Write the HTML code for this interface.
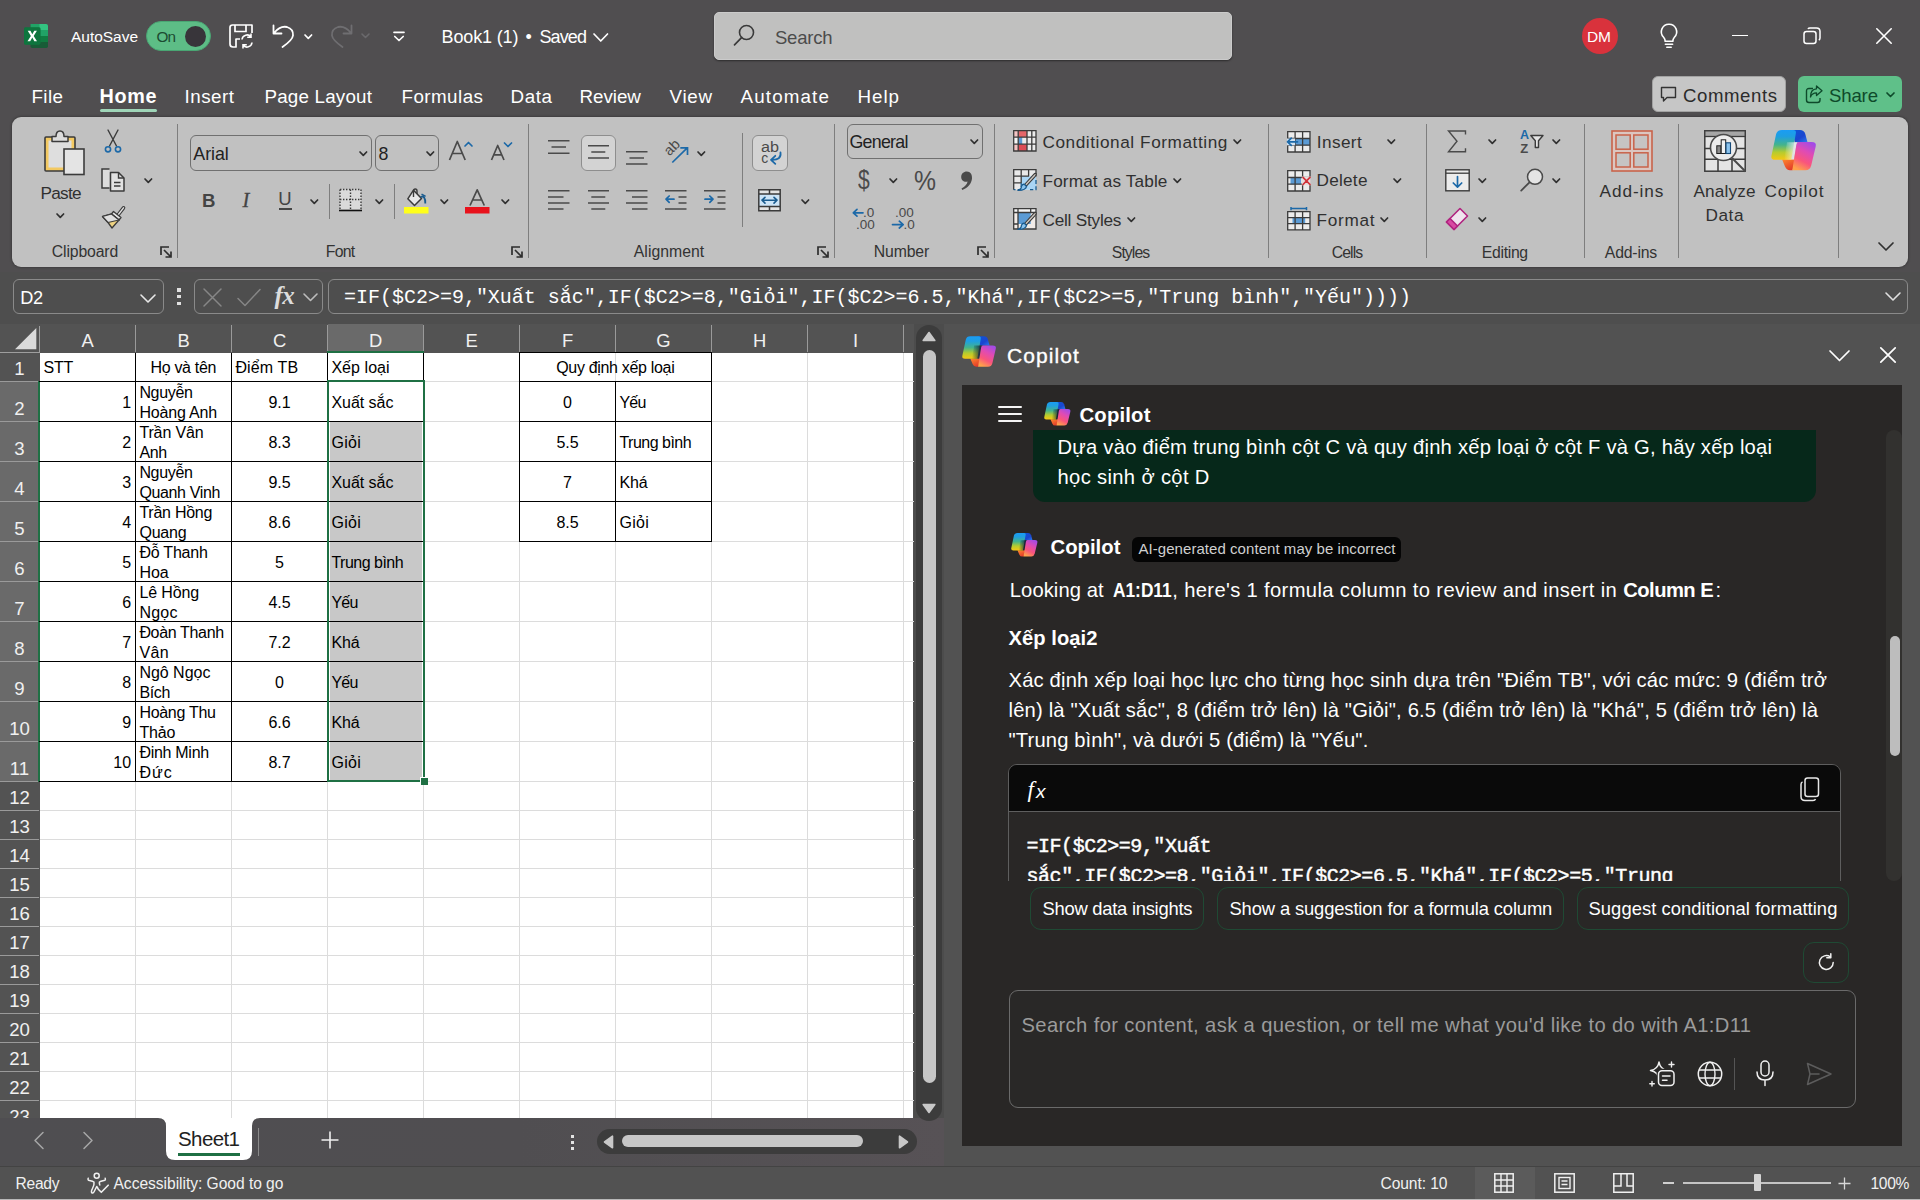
<!DOCTYPE html>
<html lang="en"><head><meta charset="utf-8"><title>Book1 - Excel</title><style>
html,body{margin:0;padding:0}
body{width:1920px;height:1200px;overflow:hidden;background:#504e50;position:relative;font-family:"Liberation Sans",sans-serif;}
.a{position:absolute;box-sizing:border-box}
.t{position:absolute;white-space:nowrap;line-height:1;}
svg{overflow:visible}
</style></head><body>
<!-- sec_title -->
<div id="sec_title"><svg class="a" style="left:24px;top:23.7px;" width="24" height="24" viewBox="0 0 24 24">
<rect x="6.5" y="0" width="17.5" height="24" rx="1.8" fill="#185c37"/>
<path d="M6.5 0 H15.2 V6 H6.5 Z" fill="#21a366"/><path d="M15.2 0 H22.2 Q24 0 24 1.8 V6 H15.2 Z" fill="#33c481"/>
<rect x="6.500" y="6" width="8.700" height="6" fill="#107c41"/><rect x="15.200" y="6" width="8.800" height="6" fill="#21a366"/>
<rect x="6.500" y="12" width="8.700" height="6" fill="#185c37"/><rect x="15.200" y="12" width="8.800" height="6" fill="#107c41"/>
<rect x="0" y="3.300" width="16.500" height="17.400" rx="1.600" fill="#107c41"/><rect x="0" y="3.300" width="16.500" height="17.400" rx="1.600" fill="#0c6b38" opacity=".35"/>
<path d="M3.700 6.800 H6.400 L8.300 10.300 L10.300 6.800 H12.900 L9.700 12 L13 17.200 H10.300 L8.300 13.600 L6.200 17.200 H3.500 L6.900 12 Z" fill="#fff"/></svg><span class="t" style="left:71.0px;top:29.0px;font-size:15.5px;color:#fff;letter-spacing:-0.031px;">AutoSave</span><div class="a" style="left:145.8px;top:20.8px;width:65.5px;height:30px;background:#5dbd86;border-radius:15px;border:1.5px solid #49a673;"></div><span class="t" style="left:156.5px;top:29.0px;font-size:15.3px;color:#1c4a32;letter-spacing:-0.910px;">On</span><div class="a" style="left:185px;top:25.5px;width:21px;height:21px;background:#38353a;border-radius:50%;"></div><svg class="a" style="left:229px;top:24px;" width="24" height="24" viewBox="0 0 24 24"><path d="M1 3.5 Q1 1 3.5 1 H19 L23 1 V9 M1 3.5 V20 Q1 23 4 23 H7 V15 H11" fill="none" stroke="#fff" stroke-width="1.7" stroke-linejoin="round"/>
<path d="M6 1 V7.5 H17 V1" fill="none" stroke="#fff" stroke-width="1.7"/>
<path d="M13 15.5 A5 5 0 0 1 22 13 M22 9.5 V13.3 H18.2 M23 18.5 A5 5 0 0 1 14 21 M14 24.5 V20.7 H17.8" fill="none" stroke="#fff" stroke-width="1.6"/></svg><svg class="a" style="left:272px;top:24px;" width="24" height="24" viewBox="0 0 24 24"><path d="M1.5 1.5 V9.5 H9.5 M2 9 Q8 1.5 15 3 Q21.5 5 21 11.5 Q20.5 16 10.5 23" fill="none" stroke="#fff" stroke-width="1.8" stroke-linecap="round" stroke-linejoin="round"/></svg><svg class="a" style="left:302.7px;top:32.599999999999994px;" width="10.6" height="7.4" viewBox="0 0 10.6 7.4"><path d="M2 2 L5.3 5.4 L8.6 2" fill="none" stroke="#fff" stroke-width="1.7" stroke-linecap="round" stroke-linejoin="round"/></svg><svg class="a" style="left:329px;top:24px;" width="24" height="24" viewBox="0 0 24 24"><path d="M22.5 1.5 V9.5 H14.5 M22 9 Q16 1.5 9 3 Q2.5 5 3 11.5 Q3.5 16 13.5 23" fill="none" stroke="#6f6e71" stroke-width="1.8" stroke-linecap="round" stroke-linejoin="round"/></svg><svg class="a" style="left:360.0px;top:32.25px;" width="11" height="7.5" viewBox="0 0 11 7.5"><path d="M2 2 L5.5 5.5 L9 2" fill="none" stroke="#6a696c" stroke-width="1.6" stroke-linecap="round" stroke-linejoin="round"/></svg><svg class="a" style="left:392.5px;top:30.5px;" width="12" height="11" viewBox="0 0 12 11"><path d="M1 1.300 H11" stroke="#fff" stroke-width="1.700" stroke-linecap="round"/><path d="M1.800 5.500 L6 9.500 L10.200 5.500" fill="none" stroke="#fff" stroke-width="1.700" stroke-linecap="round" stroke-linejoin="round"/></svg><span class="t" style="left:441.5px;top:28.0px;font-size:18px;color:#fff;letter-spacing:-0.130px;">Book1 (1)</span><span class="t" style="left:525.5px;top:28.0px;font-size:18px;color:#fff;">•</span><span class="t" style="left:539.5px;top:28.0px;font-size:18px;color:#fff;letter-spacing:-0.885px;">Saved</span><svg class="a" style="left:592.45px;top:31.700000000000003px;" width="17.5" height="11" viewBox="0 0 17.5 11"><path d="M2 2 L8.75 9 L15.5 2" fill="none" stroke="#fff" stroke-width="1.7" stroke-linecap="round" stroke-linejoin="round"/></svg><div class="a" style="left:713.5px;top:12px;width:518px;height:47.5px;background:#c0c0bf;border-radius:5px;border:1px solid #cbcbcb;box-shadow:0 1px 2px rgba(0,0,0,.45);"></div><svg class="a" style="left:733.3px;top:24px;" width="24" height="24" viewBox="0 0 24 24"><circle cx="13.5" cy="8.5" r="7" fill="none" stroke="#3a3a3a" stroke-width="1.6"/><path d="M8.8 13.4 L1.5 20.8" stroke="#3a3a3a" stroke-width="1.7" stroke-linecap="round"/></svg><span class="t" style="left:775.0px;top:29.0px;font-size:18.5px;color:#4c4c4c;letter-spacing:-0.224px;">Search</span><div class="a" style="left:1581.5px;top:18px;width:36px;height:36px;background:#d9323c;border-radius:50%;"></div><span class="t" style="left:1587.0px;top:29.0px;font-size:15.5px;color:#fff;letter-spacing:-0.106px;">DM</span><svg class="a" style="left:1658px;top:23px;" width="22" height="26" viewBox="0 0 22 26"><path d="M11 1.2 A7.6 7.6 0 0 0 5.6 14.2 Q7 15.8 7.2 18.3 H14.8 Q15 15.8 16.4 14.2 A7.6 7.6 0 0 0 11 1.2 Z" fill="none" stroke="#fff" stroke-width="1.6"/><path d="M7.4 21.2 H14.6 M8.8 24.2 H13.2" stroke="#fff" stroke-width="1.6" stroke-linecap="round"/></svg><div class="a" style="left:1732px;top:34.5px;width:16px;height:1.5px;background:#fff;"></div><svg class="a" style="left:1803px;top:27px;" width="18" height="18" viewBox="0 0 18 18"><rect x="1" y="4.5" width="12" height="12" rx="2.5" fill="none" stroke="#fff" stroke-width="1.5"/><path d="M5 2 Q5.5 1 7 1 H13.5 Q17 1 17 4.5 V11 Q17 12.5 15.8 13" fill="none" stroke="#fff" stroke-width="1.5"/></svg><svg class="a" style="left:1876px;top:28px;" width="16" height="16" viewBox="0 0 16 16"><path d="M0.8 0.8 L15.2 15.2 M15.2 0.8 L0.8 15.2" stroke="#fff" stroke-width="1.6" stroke-linecap="round"/></svg><span class="t" style="left:31.5px;top:88.0px;font-size:18.8px;color:#fff;letter-spacing:0.402px;">File</span><span class="t" style="left:184.5px;top:88.0px;font-size:18.8px;color:#fff;letter-spacing:0.496px;">Insert</span><span class="t" style="left:264.5px;top:88.0px;font-size:18.8px;color:#fff;letter-spacing:0.192px;">Page Layout</span><span class="t" style="left:401.5px;top:88.0px;font-size:18.8px;color:#fff;letter-spacing:0.450px;">Formulas</span><span class="t" style="left:510.5px;top:88.0px;font-size:18.8px;color:#fff;letter-spacing:0.596px;">Data</span><span class="t" style="left:579.5px;top:88.0px;font-size:18.8px;color:#fff;letter-spacing:-0.029px;">Review</span><span class="t" style="left:669.5px;top:88.0px;font-size:18.8px;color:#fff;letter-spacing:0.696px;">View</span><span class="t" style="left:740.5px;top:88.0px;font-size:18.8px;color:#fff;letter-spacing:1.147px;">Automate</span><span class="t" style="left:857.5px;top:88.0px;font-size:18.8px;color:#fff;letter-spacing:0.945px;">Help</span><span class="t" style="left:99.5px;top:87.0px;font-size:19.8px;color:#fff;letter-spacing:0.663px;font-weight:bold;">Home</span><div class="a" style="left:100px;top:108.8px;width:57px;height:3px;background:#9fd5b8;border-radius:1.5px;"></div><div class="a" style="left:1652px;top:76px;width:134px;height:36px;background:#c6c6c6;border-radius:6px;border:1px solid #a2a2a2;"></div><svg class="a" style="left:1660px;top:85.5px;" width="18" height="18" viewBox="0 0 18 18"><path d="M1.5 1.5 H15.5 V11.5 H7 L3.5 15 V11.5 H1.5 Z" fill="none" stroke="#333" stroke-width="1.4" stroke-linejoin="round"/></svg><span class="t" style="left:1683.0px;top:87.0px;font-size:18.6px;color:#2b2b2b;letter-spacing:0.582px;">Comments</span><div class="a" style="left:1798px;top:76px;width:104px;height:36px;background:#5fc089;border-radius:6px;"></div><svg class="a" style="left:1805px;top:85px;" width="18" height="19" viewBox="0 0 18 19"><path d="M8 3.5 H4 Q1.5 3.5 1.5 6 V15 Q1.5 17.5 4 17.5 H12.5 Q15 17.5 15 15 V13" fill="none" stroke="#0e4a2b" stroke-width="1.4"/><path d="M11.5 1 L17 5.8 L11.5 10.6 V7.8 Q7 7.8 5.5 12 Q5.5 4 11.5 3.8 Z" fill="none" stroke="#0e4a2b" stroke-width="1.3" stroke-linejoin="round"/></svg><span class="t" style="left:1829.0px;top:87.0px;font-size:18.6px;color:#0e4a2b;letter-spacing:-0.159px;">Share</span><svg class="a" style="left:1884.5px;top:91.25px;" width="11" height="7.5" viewBox="0 0 11 7.5"><path d="M2 2 L5.5 5.5 L9 2" fill="none" stroke="#0e4a2b" stroke-width="1.7" stroke-linecap="round" stroke-linejoin="round"/></svg></div>
<!-- sec_ribbon -->
<div id="sec_ribbon"><div class="a" style="left:12px;top:117px;width:1895.5px;height:150px;background:#c1c1c1;border-radius:9px;box-shadow:0 0 3px rgba(0,0,0,.45);"></div><div class="a" style="left:176.5px;top:124px;width:1px;height:134px;background:#7e7e7e;"></div><div class="a" style="left:527.5px;top:124px;width:1px;height:134px;background:#7e7e7e;"></div><div class="a" style="left:834.0px;top:124px;width:1px;height:134px;background:#7e7e7e;"></div><div class="a" style="left:994.0px;top:124px;width:1px;height:134px;background:#7e7e7e;"></div><div class="a" style="left:1267.5px;top:124px;width:1px;height:134px;background:#7e7e7e;"></div><div class="a" style="left:1425.5px;top:124px;width:1px;height:134px;background:#7e7e7e;"></div><div class="a" style="left:1584.0px;top:124px;width:1px;height:134px;background:#7e7e7e;"></div><div class="a" style="left:1678.0px;top:124px;width:1px;height:134px;background:#7e7e7e;"></div><div class="a" style="left:1837.5px;top:124px;width:1px;height:134px;background:#7e7e7e;"></div><div class="a" style="left:328.5px;top:184px;width:1px;height:35px;background:#7e7e7e;"></div><div class="a" style="left:393.5px;top:184px;width:1px;height:35px;background:#7e7e7e;"></div><div class="a" style="left:741.5px;top:133px;width:1px;height:94px;background:#7e7e7e;"></div><span class="t" style="left:51.8px;top:244.0px;font-size:15.8px;color:#333;letter-spacing:-0.153px;">Clipboard</span><span class="t" style="left:325.8px;top:244.0px;font-size:15.8px;color:#333;letter-spacing:-0.733px;">Font</span><span class="t" style="left:633.8px;top:244.0px;font-size:15.8px;color:#333;letter-spacing:0.021px;">Alignment</span><span class="t" style="left:873.8px;top:244.0px;font-size:15.8px;color:#333;letter-spacing:-0.154px;">Number</span><span class="t" style="left:1111.8px;top:245.0px;font-size:15.8px;color:#333;letter-spacing:-0.931px;">Styles</span><span class="t" style="left:1331.8px;top:245.0px;font-size:15.8px;color:#333;letter-spacing:-0.939px;">Cells</span><span class="t" style="left:1481.8px;top:245.0px;font-size:15.8px;color:#333;letter-spacing:-0.325px;">Editing</span><span class="t" style="left:1604.8px;top:245.0px;font-size:15.8px;color:#333;letter-spacing:-0.194px;">Add-ins</span><svg class="a" style="left:160px;top:246px;" width="12" height="12" viewBox="0 0 12 12"><path d="M1 9 V1 H9" fill="none" stroke="#2e2e2e" stroke-width="1.700"/><path d="M4 4 L10.500 10.500 M5.500 11 H11 V5.500" fill="none" stroke="#2e2e2e" stroke-width="1.700"/></svg><svg class="a" style="left:511px;top:246px;" width="12" height="12" viewBox="0 0 12 12"><path d="M1 9 V1 H9" fill="none" stroke="#2e2e2e" stroke-width="1.700"/><path d="M4 4 L10.500 10.500 M5.500 11 H11 V5.500" fill="none" stroke="#2e2e2e" stroke-width="1.700"/></svg><svg class="a" style="left:817px;top:246px;" width="12" height="12" viewBox="0 0 12 12"><path d="M1 9 V1 H9" fill="none" stroke="#2e2e2e" stroke-width="1.700"/><path d="M4 4 L10.500 10.500 M5.500 11 H11 V5.500" fill="none" stroke="#2e2e2e" stroke-width="1.700"/></svg><svg class="a" style="left:977px;top:246px;" width="12" height="12" viewBox="0 0 12 12"><path d="M1 9 V1 H9" fill="none" stroke="#2e2e2e" stroke-width="1.700"/><path d="M4 4 L10.500 10.500 M5.500 11 H11 V5.500" fill="none" stroke="#2e2e2e" stroke-width="1.700"/></svg><svg class="a" style="left:43px;top:130px;" width="42" height="45" viewBox="0 0 42 45">
<rect x="2" y="7" width="30" height="34" rx="1" fill="#f3c961" stroke="#3b3b3b" stroke-width="1.6"/>
<rect x="5.5" y="10.5" width="23" height="27" fill="#dedede"/>
<path d="M9 11.5 V6.5 H13 Q13 1 17 1 Q21 1 21 6.5 H25 V11.5 Z" fill="#dcdcdc" stroke="#3b3b3b" stroke-width="1.5" stroke-linejoin="round"/>
<rect x="21" y="19" width="20" height="25.5" fill="#e4e4e4" stroke="#3b3b3b" stroke-width="1.6"/></svg><span class="t" style="left:40.5px;top:185.0px;font-size:17.2px;color:#303030;letter-spacing:-0.746px;">Paste</span><svg class="a" style="left:54.7px;top:212.10000000000002px;" width="10.6" height="7.4" viewBox="0 0 10.6 7.4"><path d="M2 2 L5.3 5.4 L8.6 2" fill="none" stroke="#303030" stroke-width="1.7" stroke-linecap="round" stroke-linejoin="round"/></svg><svg class="a" style="left:104px;top:129px;" width="18" height="25" viewBox="0 0 18 25"><path d="M4 1 L12.5 17 M14 1 L5.5 17" stroke="#3b3b3b" stroke-width="1.4" fill="none" stroke-linecap="round"/>
<circle cx="4" cy="20.3" r="2.6" fill="none" stroke="#1c69a8" stroke-width="1.6"/><circle cx="14" cy="20.3" r="2.6" fill="none" stroke="#1c69a8" stroke-width="1.6"/></svg><svg class="a" style="left:101px;top:168px;" width="24" height="24" viewBox="0 0 24 24"><path d="M8.5 1 H1 V20 H8.5" fill="#dcdcdc" stroke="#3b3b3b" stroke-width="1.5"/>
<path d="M9.5 4.5 H17.5 L23 10 V23 H9.5 Z" fill="#e2e2e2" stroke="#3b3b3b" stroke-width="1.5" stroke-linejoin="round"/>
<path d="M17.5 4.5 V10 H23" fill="none" stroke="#3b3b3b" stroke-width="1.4"/>
<path d="M13 14.5 H19.5 M13 18 H19.5" stroke="#3b3b3b" stroke-width="1.5"/></svg><svg class="a" style="left:142.7px;top:176.60000000000002px;" width="10.6" height="7.4" viewBox="0 0 10.6 7.4"><path d="M2 2 L5.3 5.4 L8.6 2" fill="none" stroke="#303030" stroke-width="1.7" stroke-linecap="round" stroke-linejoin="round"/></svg><svg class="a" style="left:101px;top:206px;" width="24" height="23" viewBox="0 0 24 23"><path d="M17 9 L22.5 1.8" stroke="#3b3b3b" stroke-width="3.6" stroke-linecap="round"/><path d="M17 9 L22.5 1.8" stroke="#e0e0e0" stroke-width="1.4" stroke-linecap="round"/>
<path d="M12.5 5.5 L20 11.5 L18 14 L10.5 8 Z" fill="#e6e6e6" stroke="#3b3b3b" stroke-width="1.3" stroke-linejoin="round"/>
<path d="M10.5 8 L18 14 L11 22 L7 16.5 L1.5 10.5 Z" fill="#efd382" stroke="#3b3b3b" stroke-width="1.3" stroke-linejoin="round"/>
<path d="M1.5 10.5 L10.5 8 L18 14 L7 16.5 Z" fill="#e0e0e0" stroke="#3b3b3b" stroke-width="1.2" stroke-linejoin="round"/></svg><div class="a" style="left:190px;top:135px;width:182px;height:36px;border:1px solid #707070;border-radius:6px;"></div><span class="t" style="left:193.3px;top:146.0px;font-size:17.8px;color:#222;letter-spacing:-0.028px;">Arial</span><svg class="a" style="left:357.7px;top:149.60000000000002px;" width="10.6" height="7.4" viewBox="0 0 10.6 7.4"><path d="M2 2 L5.3 5.4 L8.6 2" fill="none" stroke="#303030" stroke-width="1.7" stroke-linecap="round" stroke-linejoin="round"/></svg><div class="a" style="left:375px;top:135px;width:64px;height:36px;border:1px solid #707070;border-radius:6px;"></div><span class="t" style="left:378.5px;top:146.0px;font-size:17.8px;color:#222;">8</span><svg class="a" style="left:424.7px;top:149.60000000000002px;" width="10.6" height="7.4" viewBox="0 0 10.6 7.4"><path d="M2 2 L5.3 5.4 L8.6 2" fill="none" stroke="#303030" stroke-width="1.7" stroke-linecap="round" stroke-linejoin="round"/></svg><svg class="a" style="left:448px;top:138px;" width="26" height="24" viewBox="0 0 26 24"><path d="M1.5 22 L9.3 3.5 L17.2 22 M4.3 15.5 H14.3" fill="none" stroke="#4a4a4a" stroke-width="1.7" stroke-linejoin="round"/><path d="M17 8 L20.5 4.5 L24 8" fill="none" stroke="#1c69a8" stroke-width="1.7" stroke-linecap="round" stroke-linejoin="round"/></svg><svg class="a" style="left:490px;top:138px;" width="24" height="24" viewBox="0 0 24 24"><path d="M1.5 22 L7.7 7.5 L14 22 M3.8 16.8 H11.7" fill="none" stroke="#4a4a4a" stroke-width="1.7" stroke-linejoin="round"/><path d="M14.5 5 L18 8.5 L21.5 5" fill="none" stroke="#1c69a8" stroke-width="1.7" stroke-linecap="round" stroke-linejoin="round"/></svg><span class="t" style="left:202.0px;top:192.0px;font-size:18.6px;color:#444;font-weight:bold;">B</span><span class="t" style="left:242.5px;top:190.0px;font-size:20.5px;color:#444;font-style:italic;font-family:'Liberation Serif',serif;-webkit-text-stroke:0.3px #444;">I</span><span class="t" style="left:278.3px;top:190.0px;font-size:18.5px;color:#444;">U</span><div class="a" style="left:278.8px;top:208.2px;width:13.5px;height:1.7px;background:#444;"></div><svg class="a" style="left:308.7px;top:197.60000000000002px;" width="10.6" height="7.4" viewBox="0 0 10.6 7.4"><path d="M2 2 L5.3 5.4 L8.6 2" fill="none" stroke="#303030" stroke-width="1.7" stroke-linecap="round" stroke-linejoin="round"/></svg><svg class="a" style="left:339px;top:188px;" width="23" height="24" viewBox="0 0 23 24"><rect x="1" y="1.5" width="21" height="20" fill="#dadada"/>
<path d="M1 1.5 H22 M1 11.5 H22 M1 1.5 V21 M11.5 1.5 V21 M22 1.5 V21" fill="none" stroke="#3b3b3b" stroke-width="1.4" stroke-dasharray="1.4 1.6"/>
<path d="M0 22.5 H23" stroke="#111" stroke-width="1.6"/></svg><svg class="a" style="left:373.7px;top:197.60000000000002px;" width="10.6" height="7.4" viewBox="0 0 10.6 7.4"><path d="M2 2 L5.3 5.4 L8.6 2" fill="none" stroke="#303030" stroke-width="1.7" stroke-linecap="round" stroke-linejoin="round"/></svg><svg class="a" style="left:404px;top:188px;" width="25" height="26" viewBox="0 0 25 26"><rect x="0" y="19" width="24.5" height="6.5" fill="#ffff1a"/>
<path d="M9.5 2.2 L17.5 10.5 L10.5 17.5 L3.8 10.8 Z" fill="#e8e8e8" stroke="#3b3b3b" stroke-width="1.5" stroke-linejoin="round"/>
<path d="M9.5 9 V3 Q9.5 1 11.3 1 Q13 1 13 3 V6" fill="none" stroke="#3b3b3b" stroke-width="1.4"/>
<path d="M16.5 9 Q21.5 7 21.3 15.5" fill="none" stroke="#1b5c8f" stroke-width="1.8"/><path d="M17.5 6.2 L21.6 8.4" stroke="#1b5c8f" stroke-width="1.6"/></svg><svg class="a" style="left:438.7px;top:197.60000000000002px;" width="10.6" height="7.4" viewBox="0 0 10.6 7.4"><path d="M2 2 L5.3 5.4 L8.6 2" fill="none" stroke="#303030" stroke-width="1.7" stroke-linecap="round" stroke-linejoin="round"/></svg><svg class="a" style="left:465px;top:188px;" width="25" height="26" viewBox="0 0 25 26"><rect x="0" y="19" width="24.5" height="6.5" fill="#e8121c"/><path d="M5 17.5 L12.2 1.8 L19.3 17.5 M7.5 12 H16.8" fill="none" stroke="#4a4a4a" stroke-width="1.7" stroke-linejoin="round"/></svg><svg class="a" style="left:499.7px;top:197.60000000000002px;" width="10.6" height="7.4" viewBox="0 0 10.6 7.4"><path d="M2 2 L5.3 5.4 L8.6 2" fill="none" stroke="#303030" stroke-width="1.7" stroke-linecap="round" stroke-linejoin="round"/></svg><svg class="a" style="left:548px;top:140.3px;" width="23" height="20" viewBox="0 0 23 20"><path d="M0 0.8 H21.5 M3.5 7.0 H18 M0 13.3 H21.5 " stroke="#4a4a4a" stroke-width="1.5" fill="none"/></svg><div class="a" style="left:580.5px;top:135px;width:35.5px;height:36px;background:#d3d3d3;border:1px solid #8e8e8e;border-radius:6px;"></div><svg class="a" style="left:587.5px;top:145px;" width="23" height="20" viewBox="0 0 23 20"><path d="M0 0.8 H21 M3.3 7.0 H17.3 M0 13.1 H21 " stroke="#4a4a4a" stroke-width="1.5" fill="none"/></svg><svg class="a" style="left:626.3px;top:151.1px;" width="23" height="20" viewBox="0 0 23 20"><path d="M0 0.8 H21.5 M3.5 6.9 H18 M0 13.0 H21.5 " stroke="#4a4a4a" stroke-width="1.5" fill="none"/></svg><svg class="a" style="left:663px;top:140px;" width="27" height="25" viewBox="0 0 27 25"><text x="0" y="0" transform="translate(6.5,16.5) rotate(-45)" font-family="Liberation Sans, sans-serif" font-size="14.5" fill="#4a4a4a">ab</text>
<path d="M9.3 22.500 L24 8.200 M17.300 7.800 H24.500 V15" fill="none" stroke="#1c69a8" stroke-width="1.700" stroke-linejoin="miter"/></svg><svg class="a" style="left:695.7px;top:149.60000000000002px;" width="10.6" height="7.4" viewBox="0 0 10.6 7.4"><path d="M2 2 L5.3 5.4 L8.6 2" fill="none" stroke="#303030" stroke-width="1.7" stroke-linecap="round" stroke-linejoin="round"/></svg><div class="a" style="left:752px;top:135px;width:35.5px;height:36px;background:#d3d3d3;border:1px solid #8e8e8e;border-radius:6px;"></div><svg class="a" style="left:758px;top:141px;" width="24" height="24" viewBox="0 0 24 24"><text x="3" y="10.600" font-family="Liberation Sans, sans-serif" font-size="14" fill="#4a4a4a" textLength="18" lengthAdjust="spacingAndGlyphs">ab</text><text x="3.300" y="22.300" font-family="Liberation Sans, sans-serif" font-size="14" fill="#4a4a4a">c</text>
<path d="M22.500 11.500 Q23.500 19.300 13.500 18.800 M17.300 14.800 L13 18.800 L17.300 22.800" fill="none" stroke="#1c69a8" stroke-width="1.800" stroke-linejoin="round" stroke-linecap="round"/></svg><svg class="a" style="left:548px;top:190.3px;" width="23" height="26" viewBox="0 0 23 26"><path d="M0 0.8 H21.5 M0 6.9 H15.5 M0 13.0 H21.5 M0 19.1 H15.5 " stroke="#4a4a4a" stroke-width="1.5" fill="none"/></svg><svg class="a" style="left:587.5px;top:190.3px;" width="23" height="26" viewBox="0 0 23 26"><path d="M0 0.8 H21 M3.3 6.9 H17.3 M0 13.0 H21 M3.3 19.1 H17.3 " stroke="#4a4a4a" stroke-width="1.5" fill="none"/></svg><svg class="a" style="left:626.3px;top:190.3px;" width="23" height="26" viewBox="0 0 23 26"><path d="M0 0.8 H21.5 M6 6.9 H21.5 M0 13.0 H21.5 M6 19.1 H21.5 " stroke="#4a4a4a" stroke-width="1.5" fill="none"/></svg><svg class="a" style="left:665px;top:190.3px;" width="23" height="21" viewBox="0 0 23 21"><path d="M0 0.800 H21.500 M13.500 6.900 H21.500 M13.500 12.900 H21.500 M0 18.900 H21.500" stroke="#4a4a4a" stroke-width="1.500" fill="none"/>
<path d="M1.200 9.200 H9 M4.200 6 L1 9.200 L4.200 12.400" fill="none" stroke="#1c69a8" stroke-width="1.700" stroke-linecap="round" stroke-linejoin="round"/></svg><svg class="a" style="left:704px;top:190.3px;" width="23" height="21" viewBox="0 0 23 21"><path d="M0 0.800 H21.500 M13.500 6.900 H21.500 M13.500 12.900 H21.500 M0 18.900 H21.500" stroke="#4a4a4a" stroke-width="1.500" fill="none"/>
<path d="M1 9.200 H8.800 M5.800 6 L9 9.200 L5.800 12.400" fill="none" stroke="#1c69a8" stroke-width="1.700" stroke-linecap="round" stroke-linejoin="round"/></svg><svg class="a" style="left:758px;top:188.8px;" width="23" height="23" viewBox="0 0 23 23"><rect x="0.800" y="0.800" width="21.400" height="20.900" fill="#e4e4e4"/><rect x="0.800" y="5" width="21.400" height="12.500" fill="#cde5f8"/>
<path d="M0.800 0.800 H22.200 V21.700 H0.800 Z M0.800 5 H22.200 M0.800 17.500 H22.200 M11.500 0.800 V5 M11.500 17.500 V21.700" stroke="#3b3b3b" stroke-width="1.500" fill="none"/>
<path d="M4 11.200 H19 M7 8.300 L4 11.200 L7 14.100 M16 8.300 L19 11.200 L16 14.100" fill="none" stroke="#1b5c8f" stroke-width="1.600" stroke-linecap="round" stroke-linejoin="round"/></svg><svg class="a" style="left:799.7px;top:197.60000000000002px;" width="10.6" height="7.4" viewBox="0 0 10.6 7.4"><path d="M2 2 L5.3 5.4 L8.6 2" fill="none" stroke="#303030" stroke-width="1.7" stroke-linecap="round" stroke-linejoin="round"/></svg><div class="a" style="left:847px;top:123.5px;width:136px;height:35px;border:1px solid #707070;border-radius:6px;"></div><span class="t" style="left:849.5px;top:134.0px;font-size:17.8px;color:#222;letter-spacing:-0.721px;">General</span><svg class="a" style="left:968.7px;top:137.60000000000002px;" width="10.6" height="7.4" viewBox="0 0 10.6 7.4"><path d="M2 2 L5.3 5.4 L8.6 2" fill="none" stroke="#303030" stroke-width="1.7" stroke-linecap="round" stroke-linejoin="round"/></svg><span class="t" style="left:857.5px;top:167.0px;font-size:27px;color:#4a4a4a;transform:scaleX(.78);transform-origin:0 0;">$</span><svg class="a" style="left:887.7px;top:176.60000000000002px;" width="10.6" height="7.4" viewBox="0 0 10.6 7.4"><path d="M2 2 L5.3 5.4 L8.6 2" fill="none" stroke="#303030" stroke-width="1.7" stroke-linecap="round" stroke-linejoin="round"/></svg><span class="t" style="left:914.0px;top:167.0px;font-size:27.5px;color:#4a4a4a;transform:scaleX(.9);transform-origin:0 0;">%</span><svg class="a" style="left:959.5px;top:170.5px;" width="13" height="20" viewBox="0 0 13 20"><path d="M6.800 0.500 C10.500 0.500 12.300 3.500 12 7.500 C11.600 12.500 8 16.800 2.300 19 L1.500 17.600 C5 15.800 7.200 13.200 7.600 10.600 C4 11.500 1.200 9.200 1.200 6 C1.200 2.800 3.600 0.500 6.800 0.500 Z" fill="#4a4a4a"/></svg><svg class="a" style="left:852px;top:207px;" width="66" height="24" viewBox="0 0 66 24"><text x="11" y="10.200" font-family="Liberation Sans, sans-serif" font-size="13.5" fill="#4a4a4a">.0</text><text x="4" y="22.300" font-family="Liberation Sans, sans-serif" font-size="13.5" fill="#4a4a4a">.00</text>
<path d="M1.500 5.800 H11 M5 2.400 L1.300 5.800 L5 9.200" fill="none" stroke="#1c69a8" stroke-width="1.700" stroke-linecap="round" stroke-linejoin="round"/>
<text x="43" y="10.200" font-family="Liberation Sans, sans-serif" font-size="13.5" fill="#4a4a4a">.00</text><text x="51.500" y="22.300" font-family="Liberation Sans, sans-serif" font-size="13.5" fill="#4a4a4a">.0</text>
<path d="M40.500 17.600 H51 M47.300 14.200 L51.200 17.600 L47.300 21" fill="none" stroke="#1c69a8" stroke-width="1.700" stroke-linecap="round" stroke-linejoin="round"/></svg><svg class="a" style="left:1013px;top:130px;" width="24" height="22" viewBox="0 0 24 22"><rect x="0.700" y="0.700" width="22.300" height="20.300" fill="#ececec"/>
<rect x="0.700" y="0.700" width="4.500" height="6.500" fill="#f3c4c4"/><rect x="5.200" y="0.700" width="8.800" height="6.500" fill="#e4666a"/>
<rect x="0.700" y="14.200" width="4.500" height="6.800" fill="#f3c4c4"/><rect x="5.200" y="14.200" width="8.800" height="6.800" fill="#dc4c55"/>
<rect x="5.200" y="7.200" width="4" height="7" fill="#5b9bd5"/><rect x="0.700" y="7.200" width="4.500" height="7" fill="#f6f6f6"/>
<path d="M0.700 0.700 H23 V21 H0.700 Z M0.700 7.200 H23 M0.700 14.200 H23 M5.200 0.700 V21 M14 0.700 V21 M18.800 0.700 V21" stroke="#3b3b3b" stroke-width="1.300" fill="none"/></svg><span class="t" style="left:1042.5px;top:134.0px;font-size:17.2px;color:#303030;letter-spacing:0.569px;">Conditional Formatting</span><svg class="a" style="left:1231.7px;top:137.60000000000002px;" width="10.6" height="7.4" viewBox="0 0 10.6 7.4"><path d="M2 2 L5.3 5.4 L8.6 2" fill="none" stroke="#303030" stroke-width="1.7" stroke-linecap="round" stroke-linejoin="round"/></svg><svg class="a" style="left:1013px;top:169.2px;" width="24" height="23" viewBox="0 0 24 23"><rect x="0.700" y="0.700" width="22.300" height="20" fill="#e9e9e9"/><rect x="8.200" y="7.200" width="14.800" height="13.500" fill="#a9d5f5"/>
<path d="M0.700 20.700 V0.700 H23 V7.500 M0.700 7.200 H16 M8.200 0.700 V14 M15.600 0.700 V7.200 M0.700 13.900 H8.200" stroke="#3b3b3b" stroke-width="1.300" fill="none"/>
<path d="M23 11 V20.700 H17 M8.200 14 V20.700 H0.700" stroke="#1b5c8f" stroke-width="1.300" fill="none" stroke-dasharray="4 2.200"/><path d="M22.300 7.300 Q23.800 5.200 22.900 4.500 Q22 3.900 20.500 5.600 L11.500 15.500 L13.300 17.200 Z" fill="#cfc8c0" stroke="#3b3b3b" stroke-width="1.100" stroke-linejoin="round"/>
<path d="M11.300 15.300 L13.600 17.400 Q12.500 21.600 5 21.400 Q8.800 19.800 8.300 17.600 Q9.200 14.800 11.300 15.300 Z" fill="#8cc4ee" stroke="#1b5c8f" stroke-width="1.300" stroke-linejoin="round"/></svg><span class="t" style="left:1042.5px;top:173.0px;font-size:17.2px;color:#303030;letter-spacing:0.142px;">Format as Table</span><svg class="a" style="left:1171.7px;top:176.60000000000002px;" width="10.6" height="7.4" viewBox="0 0 10.6 7.4"><path d="M2 2 L5.3 5.4 L8.6 2" fill="none" stroke="#303030" stroke-width="1.7" stroke-linecap="round" stroke-linejoin="round"/></svg><svg class="a" style="left:1013px;top:208px;" width="24" height="23" viewBox="0 0 24 23"><rect x="0.700" y="0.700" width="22.300" height="20.300" fill="#f2ece8"/><rect x="0.700" y="0.700" width="22.300" height="3.800" fill="#f6f6f6"/>
<rect x="5" y="4.500" width="12.700" height="11.500" fill="#5b9bd5"/>
<path d="M0.700 0.700 H23 V21 H0.700 Z M0.700 4.500 H23 M5 0.700 V21 M17.700 0.700 V4.500 M0.700 16 H5" stroke="#3b3b3b" stroke-width="1.300" fill="none"/><path d="M22.300 7.300 Q23.800 5.200 22.900 4.500 Q22 3.900 20.500 5.600 L11.500 15.500 L13.300 17.200 Z" fill="#cfc8c0" stroke="#3b3b3b" stroke-width="1.100" stroke-linejoin="round"/>
<path d="M11.300 15.300 L13.600 17.400 Q12.500 21.600 5 21.400 Q8.800 19.800 8.300 17.600 Q9.200 14.800 11.300 15.300 Z" fill="#8cc4ee" stroke="#1b5c8f" stroke-width="1.300" stroke-linejoin="round"/></svg><span class="t" style="left:1042.5px;top:212.0px;font-size:17.2px;color:#303030;letter-spacing:-0.225px;">Cell Styles</span><svg class="a" style="left:1125.7px;top:215.60000000000002px;" width="10.6" height="7.4" viewBox="0 0 10.6 7.4"><path d="M2 2 L5.3 5.4 L8.6 2" fill="none" stroke="#303030" stroke-width="1.7" stroke-linecap="round" stroke-linejoin="round"/></svg><svg class="a" style="left:1287.2px;top:130.5px;" width="24" height="22" viewBox="0 0 24 22"><rect x="0.700" y="0.7" width="22.300" height="20.3" fill="#ececec"/><rect x="8.100" y="7.500" width="14.900" height="6.800" fill="#5b9bd5"/><path d="M0.700 0.7 H23 V21.0 H0.700 Z M0.700 7.5 H23 M0.700 14.2 H23 M8.100 0.7 V21.0 M15.600 0.7 V21.0" stroke="#3b3b3b" stroke-width="1.300" fill="none"/><rect x="0" y="7.500" width="8.100" height="6.800" fill="#cfe2f3"/><path d="M0.500 10.800 H10.500 M4.300 7.200 L0.500 10.800 L4.300 14.400" fill="none" stroke="#1c69a8" stroke-width="1.700" stroke-linecap="round" stroke-linejoin="round"/></svg><span class="t" style="left:1316.8px;top:134.0px;font-size:17.2px;color:#303030;letter-spacing:0.397px;">Insert</span><svg class="a" style="left:1385.7px;top:137.60000000000002px;" width="10.6" height="7.4" viewBox="0 0 10.6 7.4"><path d="M2 2 L5.3 5.4 L8.6 2" fill="none" stroke="#303030" stroke-width="1.7" stroke-linecap="round" stroke-linejoin="round"/></svg><svg class="a" style="left:1287.2px;top:169.5px;" width="26" height="22" viewBox="0 0 26 22"><rect x="0.700" y="0.7" width="22.300" height="20.3" fill="#ececec"/><rect x="3.500" y="7.500" width="10.500" height="6.800" fill="#5b9bd5"/><path d="M0.700 0.7 H23 V21.0 H0.700 Z M0.700 7.5 H23 M0.700 14.2 H23 M8.100 0.7 V21.0 M15.600 0.7 V21.0" stroke="#3b3b3b" stroke-width="1.300" fill="none"/><rect x="14.800" y="6.500" width="9" height="8.800" fill="#e6dede"/><path d="M16 7.300 L23 14.500 M23 7.300 L16 14.500" stroke="#d0323a" stroke-width="1.700" stroke-linecap="round"/></svg><span class="t" style="left:1316.5px;top:172.0px;font-size:17.2px;color:#303030;letter-spacing:0.256px;">Delete</span><svg class="a" style="left:1391.7px;top:176.60000000000002px;" width="10.6" height="7.4" viewBox="0 0 10.6 7.4"><path d="M2 2 L5.3 5.4 L8.6 2" fill="none" stroke="#303030" stroke-width="1.7" stroke-linecap="round" stroke-linejoin="round"/></svg><svg class="a" style="left:1287.2px;top:207px;" width="24" height="24" viewBox="0 0 24 24"><rect x="0.700" y="4.6" width="22.300" height="18.2" fill="#ececec"/><rect x="5.500" y="10.700" width="12.700" height="6" fill="#5b9bd5"/><path d="M0.700 4.6 H23 V22.8 H0.700 Z M0.700 10.7 H23 M0.700 16.7 H23 M8.100 4.6 V22.8 M15.600 4.6 V22.8" stroke="#3b3b3b" stroke-width="1.300" fill="none"/><path d="M4 1.500 H19.500 M4 0 V3.200 M19.500 0 V3.200" stroke="#1c69a8" stroke-width="1.500" fill="none"/></svg><span class="t" style="left:1316.5px;top:212.0px;font-size:17.2px;color:#303030;letter-spacing:0.705px;">Format</span><svg class="a" style="left:1378.7px;top:215.60000000000002px;" width="10.6" height="7.4" viewBox="0 0 10.6 7.4"><path d="M2 2 L5.3 5.4 L8.6 2" fill="none" stroke="#303030" stroke-width="1.7" stroke-linecap="round" stroke-linejoin="round"/></svg><svg class="a" style="left:1447px;top:130px;" width="20" height="23" viewBox="0 0 20 23"><path d="M18.5 4.5 V1 H1.5 L10 11.3 L1.5 21.8 H18.5 V18.3" fill="none" stroke="#4a4a4a" stroke-width="1.400" stroke-linejoin="miter"/></svg><svg class="a" style="left:1486.7px;top:137.60000000000002px;" width="10.6" height="7.4" viewBox="0 0 10.6 7.4"><path d="M2 2 L5.3 5.4 L8.6 2" fill="none" stroke="#303030" stroke-width="1.7" stroke-linecap="round" stroke-linejoin="round"/></svg><svg class="a" style="left:1445px;top:169px;" width="25" height="23" viewBox="0 0 25 23"><rect x="0.8" y="0.8" width="23.4" height="21" fill="#ececec" stroke="#3b3b3b" stroke-width="1.4"/><path d="M0.8 4.2 H24.2" stroke="#3b3b3b" stroke-width="1.3"/><path d="M12.5 7.5 V18 M8.3 14 L12.5 18.2 L16.7 14" fill="none" stroke="#1c69a8" stroke-width="1.7" stroke-linecap="round" stroke-linejoin="round"/></svg><svg class="a" style="left:1476.7px;top:176.60000000000002px;" width="10.6" height="7.4" viewBox="0 0 10.6 7.4"><path d="M2 2 L5.3 5.4 L8.6 2" fill="none" stroke="#303030" stroke-width="1.7" stroke-linecap="round" stroke-linejoin="round"/></svg><svg class="a" style="left:1445px;top:207px;" width="24" height="24" viewBox="0 0 24 24"><path d="M15 1.5 L22.5 9 L9 22.5 L1.5 15 Z" fill="#f0e4ee" stroke="#b0237f" stroke-width="1.6" stroke-linejoin="round"/><path d="M5 11.500 L12.500 19 L9 22.500 L1.500 15 Z" fill="#d84aa3" stroke="#b0237f" stroke-width="1.6" stroke-linejoin="round"/></svg><svg class="a" style="left:1476.7px;top:215.60000000000002px;" width="10.6" height="7.4" viewBox="0 0 10.6 7.4"><path d="M2 2 L5.3 5.4 L8.6 2" fill="none" stroke="#303030" stroke-width="1.7" stroke-linecap="round" stroke-linejoin="round"/></svg><svg class="a" style="left:1519px;top:128px;" width="25" height="27" viewBox="0 0 25 27"><text x="1" y="11" font-family="Liberation Sans, sans-serif" font-weight="bold" font-size="12.5" fill="#1c69a8">A</text><text x="1.3" y="25" font-family="Liberation Sans, sans-serif" font-weight="bold" font-size="13" fill="#4a4a4a">Z</text><path d="M11.800 7.500 H24 L19.500 12.800 V19.500 H16.300 V12.800 Z" fill="#e4e4e4" stroke="#3b3b3b" stroke-width="1.4" stroke-linejoin="round"/></svg><svg class="a" style="left:1550.7px;top:137.60000000000002px;" width="10.6" height="7.4" viewBox="0 0 10.6 7.4"><path d="M2 2 L5.3 5.4 L8.6 2" fill="none" stroke="#303030" stroke-width="1.7" stroke-linecap="round" stroke-linejoin="round"/></svg><svg class="a" style="left:1520px;top:168px;" width="24" height="24" viewBox="0 0 24 24"><circle cx="15" cy="8.8" r="7.5" fill="#e4e4e4" stroke="#4a4a4a" stroke-width="1.5"/><path d="M9.5 14.3 L1.2 22.6" stroke="#4a4a4a" stroke-width="1.8" stroke-linecap="round"/></svg><svg class="a" style="left:1550.7px;top:176.60000000000002px;" width="10.6" height="7.4" viewBox="0 0 10.6 7.4"><path d="M2 2 L5.3 5.4 L8.6 2" fill="none" stroke="#303030" stroke-width="1.7" stroke-linecap="round" stroke-linejoin="round"/></svg><svg class="a" style="left:1611px;top:130px;" width="42" height="42" viewBox="0 0 42 42"><rect x="1" y="1" width="40" height="40" fill="#dcc6c0" stroke="#c9634a" stroke-width="1.600"/><rect x="5" y="5" width="14.200" height="14.200" fill="#c6c4c3" stroke="#c9634a" stroke-width="1.500"/><rect x="5" y="22.8" width="14.200" height="14.200" fill="#c6c4c3" stroke="#c9634a" stroke-width="1.500"/><rect x="22.8" y="5" width="14.200" height="14.200" fill="#c6c4c3" stroke="#c9634a" stroke-width="1.500"/><rect x="22.8" y="22.8" width="14.200" height="14.200" fill="#c6c4c3" stroke="#c9634a" stroke-width="1.500"/></svg><span class="t" style="left:1599.5px;top:183.0px;font-size:17.2px;color:#303030;letter-spacing:0.946px;">Add-ins</span><svg class="a" style="left:1704px;top:130px;" width="43" height="43" viewBox="0 0 43 43"><rect x="0.800" y="0.800" width="40.400" height="40.400" fill="#e4e4e4" stroke="#3b3b3b" stroke-width="1.500"/><rect x="0.800" y="0.800" width="40.400" height="5.700" fill="#a6a6a6" stroke="#3b3b3b" stroke-width="1.300"/>
<path d="M0.800 18.500 H41.200 M0.800 29.300 H41.200 M14 29.300 V41.200 M28 29.300 V41.200" stroke="#3b3b3b" stroke-width="1.500" fill="none"/>
<path d="M28 28 L41.500 41.500" stroke="#4a4a4a" stroke-width="2"/>
<circle cx="19.500" cy="17.500" r="13" fill="#ececec" stroke="#4a4a4a" stroke-width="1.600"/>
<rect x="12.800" y="15.800" width="4.200" height="7.700" fill="#8a8a8a" stroke="#1f1f1f" stroke-width="1"/><rect x="17.200" y="9.800" width="4.500" height="13.700" fill="#f2f2f2" stroke="#1f1f1f" stroke-width="1"/><rect x="22" y="12.800" width="4.500" height="10.700" fill="#8cc4ee" stroke="#154a78" stroke-width="1.100"/></svg><span class="t" style="left:1693.5px;top:183.0px;font-size:17.2px;color:#303030;letter-spacing:0.134px;">Analyze</span><span class="t" style="left:1705.5px;top:207.0px;font-size:17.2px;color:#303030;letter-spacing:0.556px;">Data</span><svg class="a" style="left:1771px;top:130.2px;" width="45" height="40.2" viewBox="0 0 45 40.2"><defs>
<linearGradient id="c0a" x1="0" y1="0" x2="0" y2="1"><stop offset="0" stop-color="#1a9cf5"/><stop offset=".22" stop-color="#1f9fe0"/><stop offset=".5" stop-color="#44b48c"/><stop offset=".75" stop-color="#b6cc2e"/><stop offset="1" stop-color="#f5c813"/></linearGradient>
<linearGradient id="c0b" x1="0" y1="0" x2="1" y2="1"><stop offset="0" stop-color="#0b58d8"/><stop offset=".6" stop-color="#1b45cf"/><stop offset="1" stop-color="#2a7af0"/></linearGradient>
<linearGradient id="c0c" x1=".75" y1="0" x2=".3" y2="1"><stop offset="0" stop-color="#a24be6"/><stop offset=".35" stop-color="#df4bb5"/><stop offset=".68" stop-color="#f9557c"/><stop offset="1" stop-color="#ffa24a"/></linearGradient>
<linearGradient id="c0d" x1="0" y1="0" x2=".6" y2="1"><stop offset="0" stop-color="#ff8a2e"/><stop offset="1" stop-color="#e23a2a"/></linearGradient>
<linearGradient id="c0e" x1="0" y1="0" x2="1" y2="0"><stop offset="0" stop-color="#fff" stop-opacity="0"/><stop offset="1" stop-color="#f2f2f6" stop-opacity="0.85"/></linearGradient>
</defs>
<path d="M20 0 H29 Q33 0 34.2 3.800 L36.500 12.300 H24 Z" fill="url(#c0b)"/>
<path d="M11 29.300 H24.500 L21.500 40.200 H19 Q15.500 40.200 14 36.500 Z" fill="url(#c0d)"/>
<path d="M11 0 H22 Q25.500 0 24.800 3.500 L20.300 29.700 H4 Q-0.500 29.700 0.500 25.500 L5 4.500 Q6 0 11 0 Z" fill="url(#c0a)"/>
<path d="M16 12.300 H26 L22.800 29.700 H13 Z" fill="url(#c0e)"/>
<path d="M28 12.100 H40.500 Q45.800 12.100 44.700 16.500 L40.200 35.500 Q39 40.200 34.500 40.200 H21.300 L25.300 15 Q25.800 12.100 28 12.100 Z" fill="url(#c0c)"/></svg><span class="t" style="left:1764.5px;top:183.0px;font-size:17.2px;color:#303030;letter-spacing:0.910px;">Copilot</span><svg class="a" style="left:1877.0px;top:240.5px;" width="18" height="11" viewBox="0 0 18 11"><path d="M2 2 L9.0 9 L16 2" fill="none" stroke="#303030" stroke-width="1.7" stroke-linecap="round" stroke-linejoin="round"/></svg></div>
<!-- sec_formula -->
<div id="sec_formula"><div class="a" style="left:0px;top:272px;width:1920px;height:52px;background:#4e4e4e;"></div><div class="a" style="left:12.5px;top:279px;width:151.5px;height:35px;background:#4e4e4e;border:1px solid #8a8a8a;border-radius:6px;"></div><span class="t" style="left:20.3px;top:289.0px;font-size:18.2px;color:#fff;letter-spacing:-0.396px;">D2</span><svg class="a" style="left:138.6px;top:292.7px;" width="18" height="11" viewBox="0 0 18 11"><path d="M2 2 L9.0 9 L16 2" fill="none" stroke="#e8e8e8" stroke-width="1.6" stroke-linecap="round" stroke-linejoin="round"/></svg><div class="a" style="left:177.2px;top:288.2px;width:3.4px;height:3.4px;background:#e0e0e0;"></div><div class="a" style="left:177.2px;top:295.09999999999997px;width:3.4px;height:3.4px;background:#e0e0e0;"></div><div class="a" style="left:177.2px;top:301.9px;width:3.4px;height:3.4px;background:#e0e0e0;"></div><div class="a" style="left:194px;top:279px;width:128.5px;height:35px;background:#4e4e4e;border:1px solid #8a8a8a;border-radius:6px;"></div><svg class="a" style="left:203px;top:288px;" width="19" height="19" viewBox="0 0 19 19"><path d="M1 1 L18 18 M18 1 L1 18" stroke="#868686" stroke-width="1.5" stroke-linecap="round"/></svg><svg class="a" style="left:237px;top:288px;" width="24" height="19" viewBox="0 0 24 19"><path d="M1 10.5 L8 17.5 L23 1.5" fill="none" stroke="#868686" stroke-width="1.5" stroke-linecap="round" stroke-linejoin="round"/></svg><span class="t" style="left:274.5px;top:283.0px;font-size:25px;color:#dcdcdc;letter-spacing:-0.5px;font-weight:bold;font-style:italic;font-family:'Liberation Serif',serif;">fx</span><svg class="a" style="left:302.0px;top:292.25px;" width="17" height="10.5" viewBox="0 0 17 10.5"><path d="M2 2 L8.5 8.5 L15 2" fill="none" stroke="#bcbcbc" stroke-width="1.6" stroke-linecap="round" stroke-linejoin="round"/></svg><div class="a" style="left:328px;top:279px;width:1579.5px;height:35px;background:#4e4e4e;border:1px solid #8a8a8a;border-radius:6px;"></div><span class="t" style="left:344.0px;top:288.0px;font-size:20px;color:#fff;letter-spacing:-0.013px;font-family:'Liberation Mono',monospace;">=IF($C2&gt;=9,&quot;Xuất sắc&quot;,IF($C2&gt;=8,&quot;Giỏi&quot;,IF($C2&gt;=6.5,&quot;Khá&quot;,IF($C2&gt;=5,&quot;Trung bình&quot;,&quot;Yếu&quot;))))</span><svg class="a" style="left:1884.0px;top:290.5px;" width="18" height="11" viewBox="0 0 18 11"><path d="M2 2 L9.0 9 L16 2" fill="none" stroke="#e0e0e0" stroke-width="1.6" stroke-linecap="round" stroke-linejoin="round"/></svg></div>
<!-- sec_grid -->
<div id="sec_grid"><div class="a" style="left:0;top:324px;width:944px;height:794px;overflow:hidden;background:#505050"><div class="a" style="left:40px;top:28.5px;width:873.3px;height:800px;background:#fff;"></div><div class="a" style="left:40px;top:57px;width:873.5px;height:1px;background:#dcdcdc;"></div><div class="a" style="left:40px;top:97px;width:873.5px;height:1px;background:#dcdcdc;"></div><div class="a" style="left:40px;top:137px;width:873.5px;height:1px;background:#dcdcdc;"></div><div class="a" style="left:40px;top:177px;width:873.5px;height:1px;background:#dcdcdc;"></div><div class="a" style="left:40px;top:217px;width:873.5px;height:1px;background:#dcdcdc;"></div><div class="a" style="left:40px;top:257px;width:873.5px;height:1px;background:#dcdcdc;"></div><div class="a" style="left:40px;top:297px;width:873.5px;height:1px;background:#dcdcdc;"></div><div class="a" style="left:40px;top:337px;width:873.5px;height:1px;background:#dcdcdc;"></div><div class="a" style="left:40px;top:377px;width:873.5px;height:1px;background:#dcdcdc;"></div><div class="a" style="left:40px;top:417px;width:873.5px;height:1px;background:#dcdcdc;"></div><div class="a" style="left:40px;top:457px;width:873.5px;height:1px;background:#dcdcdc;"></div><div class="a" style="left:40px;top:486px;width:873.5px;height:1px;background:#dcdcdc;"></div><div class="a" style="left:40px;top:515px;width:873.5px;height:1px;background:#dcdcdc;"></div><div class="a" style="left:40px;top:544px;width:873.5px;height:1px;background:#dcdcdc;"></div><div class="a" style="left:40px;top:573px;width:873.5px;height:1px;background:#dcdcdc;"></div><div class="a" style="left:40px;top:602px;width:873.5px;height:1px;background:#dcdcdc;"></div><div class="a" style="left:40px;top:631px;width:873.5px;height:1px;background:#dcdcdc;"></div><div class="a" style="left:40px;top:660px;width:873.5px;height:1px;background:#dcdcdc;"></div><div class="a" style="left:40px;top:689px;width:873.5px;height:1px;background:#dcdcdc;"></div><div class="a" style="left:40px;top:718px;width:873.5px;height:1px;background:#dcdcdc;"></div><div class="a" style="left:40px;top:747px;width:873.5px;height:1px;background:#dcdcdc;"></div><div class="a" style="left:40px;top:776px;width:873.5px;height:1px;background:#dcdcdc;"></div><div class="a" style="left:40px;top:805px;width:873.5px;height:1px;background:#dcdcdc;"></div><div class="a" style="left:40px;top:834px;width:873.5px;height:1px;background:#dcdcdc;"></div><div class="a" style="left:135px;top:29px;width:1px;height:800px;background:#dcdcdc;"></div><div class="a" style="left:231px;top:29px;width:1px;height:800px;background:#dcdcdc;"></div><div class="a" style="left:327px;top:29px;width:1px;height:800px;background:#dcdcdc;"></div><div class="a" style="left:423px;top:29px;width:1px;height:800px;background:#dcdcdc;"></div><div class="a" style="left:519px;top:29px;width:1px;height:800px;background:#dcdcdc;"></div><div class="a" style="left:615px;top:29px;width:1px;height:800px;background:#dcdcdc;"></div><div class="a" style="left:711px;top:29px;width:1px;height:800px;background:#dcdcdc;"></div><div class="a" style="left:807px;top:29px;width:1px;height:800px;background:#dcdcdc;"></div><div class="a" style="left:903px;top:29px;width:1px;height:800px;background:#dcdcdc;"></div><div class="a" style="left:0px;top:0px;width:913.5px;height:28.5px;background:#535353;"></div><div class="a" style="left:0px;top:28px;width:40px;height:800px;background:#535353;"></div><div class="a" style="left:328px;top:0px;width:95px;height:28.5px;background:#6a6a6a;"></div><div class="a" style="left:0px;top:58px;width:39px;height:399px;background:#6a6a6a;"></div><div class="a" style="left:0px;top:28px;width:39.5px;height:1px;background:#9e9e9e;"></div><div class="a" style="left:39px;top:2px;width:1px;height:26.5px;background:#9e9e9e;"></div><div class="a" style="left:135px;top:0.5px;width:1px;height:27.5px;background:#9a9a9a;"></div><div class="a" style="left:231px;top:0.5px;width:1px;height:27.5px;background:#9a9a9a;"></div><div class="a" style="left:327px;top:0.5px;width:1px;height:27.5px;background:#9a9a9a;"></div><div class="a" style="left:423px;top:0.5px;width:1px;height:27.5px;background:#9a9a9a;"></div><div class="a" style="left:519px;top:0.5px;width:1px;height:27.5px;background:#9a9a9a;"></div><div class="a" style="left:615px;top:0.5px;width:1px;height:27.5px;background:#9a9a9a;"></div><div class="a" style="left:711px;top:0.5px;width:1px;height:27.5px;background:#9a9a9a;"></div><div class="a" style="left:807px;top:0.5px;width:1px;height:27.5px;background:#9a9a9a;"></div><div class="a" style="left:903px;top:0.5px;width:1px;height:27.5px;background:#9a9a9a;"></div><div class="a" style="left:0px;top:57px;width:39px;height:1px;background:#9a9a9a;"></div><div class="a" style="left:0px;top:97px;width:39px;height:1px;background:#9a9a9a;"></div><div class="a" style="left:0px;top:137px;width:39px;height:1px;background:#9a9a9a;"></div><div class="a" style="left:0px;top:177px;width:39px;height:1px;background:#9a9a9a;"></div><div class="a" style="left:0px;top:217px;width:39px;height:1px;background:#9a9a9a;"></div><div class="a" style="left:0px;top:257px;width:39px;height:1px;background:#9a9a9a;"></div><div class="a" style="left:0px;top:297px;width:39px;height:1px;background:#9a9a9a;"></div><div class="a" style="left:0px;top:337px;width:39px;height:1px;background:#9a9a9a;"></div><div class="a" style="left:0px;top:377px;width:39px;height:1px;background:#9a9a9a;"></div><div class="a" style="left:0px;top:417px;width:39px;height:1px;background:#9a9a9a;"></div><div class="a" style="left:0px;top:457px;width:39px;height:1px;background:#9a9a9a;"></div><div class="a" style="left:0px;top:486px;width:39px;height:1px;background:#9a9a9a;"></div><div class="a" style="left:0px;top:515px;width:39px;height:1px;background:#9a9a9a;"></div><div class="a" style="left:0px;top:544px;width:39px;height:1px;background:#9a9a9a;"></div><div class="a" style="left:0px;top:573px;width:39px;height:1px;background:#9a9a9a;"></div><div class="a" style="left:0px;top:602px;width:39px;height:1px;background:#9a9a9a;"></div><div class="a" style="left:0px;top:631px;width:39px;height:1px;background:#9a9a9a;"></div><div class="a" style="left:0px;top:660px;width:39px;height:1px;background:#9a9a9a;"></div><div class="a" style="left:0px;top:689px;width:39px;height:1px;background:#9a9a9a;"></div><div class="a" style="left:0px;top:718px;width:39px;height:1px;background:#9a9a9a;"></div><div class="a" style="left:0px;top:747px;width:39px;height:1px;background:#9a9a9a;"></div><div class="a" style="left:0px;top:776px;width:39px;height:1px;background:#9a9a9a;"></div><div class="a" style="left:0px;top:805px;width:39px;height:1px;background:#9a9a9a;"></div><div class="a" style="left:0px;top:834px;width:39px;height:1px;background:#9a9a9a;"></div><div class="a" style="left:327px;top:27px;width:97px;height:2px;background:#1f7044;"></div><div class="a" style="left:38px;top:57px;width:2px;height:401px;background:#1f7044;"></div><svg class="a" style="left:15.4px;top:4px;" width="21.3" height="21.2" viewBox="0 0 21.3 21.2"><path d="M21.300 0 V21.200 H0 Z" fill="#dadada"/></svg><span class="t" style="left:81.4px;top:8.0px;font-size:18.4px;color:#f0f0f0;">A</span><span class="t" style="left:177.4px;top:8.0px;font-size:18.4px;color:#f0f0f0;">B</span><span class="t" style="left:272.9px;top:8.0px;font-size:18.4px;color:#f0f0f0;">C</span><span class="t" style="left:368.9px;top:8.0px;font-size:18.4px;color:#f0f0f0;">D</span><span class="t" style="left:465.4px;top:8.0px;font-size:18.4px;color:#f0f0f0;">E</span><span class="t" style="left:561.9px;top:8.0px;font-size:18.4px;color:#f0f0f0;">F</span><span class="t" style="left:656.3px;top:8.0px;font-size:18.4px;color:#f0f0f0;">G</span><span class="t" style="left:752.9px;top:8.0px;font-size:18.4px;color:#f0f0f0;">H</span><span class="t" style="left:852.9px;top:8.0px;font-size:18.4px;color:#f0f0f0;">I</span><span class="t" style="left:14.3px;top:36.0px;font-size:18.6px;color:#f0f0f0;">1</span><span class="t" style="left:14.3px;top:76.0px;font-size:18.6px;color:#f0f0f0;">2</span><span class="t" style="left:14.3px;top:116.0px;font-size:18.6px;color:#f0f0f0;">3</span><span class="t" style="left:14.3px;top:156.0px;font-size:18.6px;color:#f0f0f0;">4</span><span class="t" style="left:14.3px;top:196.0px;font-size:18.6px;color:#f0f0f0;">5</span><span class="t" style="left:14.3px;top:236.0px;font-size:18.6px;color:#f0f0f0;">6</span><span class="t" style="left:14.3px;top:276.0px;font-size:18.6px;color:#f0f0f0;">7</span><span class="t" style="left:14.3px;top:316.0px;font-size:18.6px;color:#f0f0f0;">8</span><span class="t" style="left:14.3px;top:356.0px;font-size:18.6px;color:#f0f0f0;">9</span><span class="t" style="left:9.2px;top:396.0px;font-size:18.6px;color:#f0f0f0;">10</span><span class="t" style="left:9.8px;top:436.0px;font-size:18.6px;color:#f0f0f0;">11</span><span class="t" style="left:9.2px;top:465.0px;font-size:18.6px;color:#f0f0f0;">12</span><span class="t" style="left:9.2px;top:494.0px;font-size:18.6px;color:#f0f0f0;">13</span><span class="t" style="left:9.2px;top:523.0px;font-size:18.6px;color:#f0f0f0;">14</span><span class="t" style="left:9.2px;top:552.0px;font-size:18.6px;color:#f0f0f0;">15</span><span class="t" style="left:9.2px;top:581.0px;font-size:18.6px;color:#f0f0f0;">16</span><span class="t" style="left:9.2px;top:610.0px;font-size:18.6px;color:#f0f0f0;">17</span><span class="t" style="left:9.2px;top:639.0px;font-size:18.6px;color:#f0f0f0;">18</span><span class="t" style="left:9.2px;top:668.0px;font-size:18.6px;color:#f0f0f0;">19</span><span class="t" style="left:9.2px;top:697.0px;font-size:18.6px;color:#f0f0f0;">20</span><span class="t" style="left:9.2px;top:726.0px;font-size:18.6px;color:#f0f0f0;">21</span><span class="t" style="left:9.2px;top:755.0px;font-size:18.6px;color:#f0f0f0;">22</span><span class="t" style="left:9.2px;top:784.0px;font-size:18.6px;color:#f0f0f0;">23</span><div class="a" style="left:39px;top:57px;width:385px;height:1px;background:#000;"></div><div class="a" style="left:39px;top:97px;width:385px;height:1px;background:#000;"></div><div class="a" style="left:39px;top:137px;width:385px;height:1px;background:#000;"></div><div class="a" style="left:39px;top:177px;width:385px;height:1px;background:#000;"></div><div class="a" style="left:39px;top:217px;width:385px;height:1px;background:#000;"></div><div class="a" style="left:39px;top:257px;width:385px;height:1px;background:#000;"></div><div class="a" style="left:39px;top:297px;width:385px;height:1px;background:#000;"></div><div class="a" style="left:39px;top:337px;width:385px;height:1px;background:#000;"></div><div class="a" style="left:39px;top:377px;width:385px;height:1px;background:#000;"></div><div class="a" style="left:39px;top:417px;width:385px;height:1px;background:#000;"></div><div class="a" style="left:39px;top:457px;width:385px;height:1px;background:#000;"></div><div class="a" style="left:135px;top:29px;width:1px;height:429px;background:#000;"></div><div class="a" style="left:231px;top:29px;width:1px;height:429px;background:#000;"></div><div class="a" style="left:327px;top:29px;width:1px;height:429px;background:#000;"></div><div class="a" style="left:423px;top:29px;width:1px;height:429px;background:#000;"></div><div class="a" style="left:519px;top:28px;width:193px;height:1px;background:#000;"></div><div class="a" style="left:519px;top:57px;width:193px;height:1px;background:#000;"></div><div class="a" style="left:519px;top:97px;width:193px;height:1px;background:#000;"></div><div class="a" style="left:519px;top:137px;width:193px;height:1px;background:#000;"></div><div class="a" style="left:519px;top:177px;width:193px;height:1px;background:#000;"></div><div class="a" style="left:519px;top:217px;width:193px;height:1px;background:#000;"></div><div class="a" style="left:519px;top:28px;width:1px;height:190px;background:#000;"></div><div class="a" style="left:711px;top:28px;width:1px;height:190px;background:#000;"></div><div class="a" style="left:615px;top:57px;width:1px;height:161px;background:#000;"></div><div class="a" style="left:329.5px;top:98px;width:92px;height:39px;background:#c8c8c8;"></div><div class="a" style="left:329.5px;top:138px;width:92px;height:39px;background:#c8c8c8;"></div><div class="a" style="left:329.5px;top:178px;width:92px;height:39px;background:#c8c8c8;"></div><div class="a" style="left:329.5px;top:218px;width:92px;height:39px;background:#c8c8c8;"></div><div class="a" style="left:329.5px;top:258px;width:92px;height:39px;background:#c8c8c8;"></div><div class="a" style="left:329.5px;top:298px;width:92px;height:39px;background:#c8c8c8;"></div><div class="a" style="left:329.5px;top:338px;width:92px;height:39px;background:#c8c8c8;"></div><div class="a" style="left:329.5px;top:378px;width:92px;height:39px;background:#c8c8c8;"></div><div class="a" style="left:329.5px;top:418px;width:92px;height:39px;background:#c8c8c8;"></div><div class="a" style="left:326.5px;top:56px;width:98px;height:402px;border:2px solid #1f7044;"></div><div class="a" style="left:419.5px;top:452.5px;width:8px;height:8px;background:#fff;"></div><div class="a" style="left:420.5px;top:453.5px;width:7px;height:7px;background:#1f7044;"></div><span class="t" style="left:43.4px;top:36.0px;font-size:16px;color:#000;letter-spacing:-0.110px;">STT</span><span class="t" style="left:150.6px;top:36.0px;font-size:16px;color:#000;letter-spacing:-0.342px;">Họ và tên</span><span class="t" style="left:235.4px;top:36.0px;font-size:16px;color:#000;letter-spacing:0.135px;">Điểm TB</span><span class="t" style="left:331.4px;top:36.0px;font-size:16px;color:#000;letter-spacing:0.061px;">Xếp loại</span><span class="t" style="left:122.2px;top:71.0px;font-size:16px;color:#000;">1</span><span class="t" style="left:139.4px;top:61.0px;font-size:16px;color:#000;letter-spacing:-0.330px;">Nguyễn</span><span class="t" style="left:139.4px;top:81.0px;font-size:16px;color:#000;letter-spacing:-0.179px;">Hoàng Anh</span><span class="t" style="left:268.4px;top:71.0px;font-size:16px;color:#000;">9.1</span><span class="t" style="left:331.4px;top:71.0px;font-size:16px;color:#000;letter-spacing:-0.037px;">Xuất sắc</span><span class="t" style="left:122.2px;top:111.0px;font-size:16px;color:#000;">2</span><span class="t" style="left:139.4px;top:101.0px;font-size:16px;color:#000;letter-spacing:-0.139px;">Trần Vân</span><span class="t" style="left:139.4px;top:121.0px;font-size:16px;color:#000;letter-spacing:-0.360px;">Anh</span><span class="t" style="left:268.4px;top:111.0px;font-size:16px;color:#000;">8.3</span><span class="t" style="left:331.4px;top:111.0px;font-size:16px;color:#000;letter-spacing:0.349px;">Giỏi</span><span class="t" style="left:122.2px;top:151.0px;font-size:16px;color:#000;">3</span><span class="t" style="left:139.4px;top:141.0px;font-size:16px;color:#000;letter-spacing:-0.330px;">Nguyễn</span><span class="t" style="left:139.4px;top:161.0px;font-size:16px;color:#000;letter-spacing:-0.358px;">Quanh Vinh</span><span class="t" style="left:268.4px;top:151.0px;font-size:16px;color:#000;">9.5</span><span class="t" style="left:331.4px;top:151.0px;font-size:16px;color:#000;letter-spacing:-0.037px;">Xuất sắc</span><span class="t" style="left:122.2px;top:191.0px;font-size:16px;color:#000;">4</span><span class="t" style="left:139.4px;top:181.0px;font-size:16px;color:#000;letter-spacing:-0.250px;">Trần Hồng</span><span class="t" style="left:139.4px;top:201.0px;font-size:16px;color:#000;letter-spacing:-0.197px;">Quang</span><span class="t" style="left:268.4px;top:191.0px;font-size:16px;color:#000;">8.6</span><span class="t" style="left:331.4px;top:191.0px;font-size:16px;color:#000;letter-spacing:0.349px;">Giỏi</span><span class="t" style="left:122.2px;top:231.0px;font-size:16px;color:#000;">5</span><span class="t" style="left:139.4px;top:221.0px;font-size:16px;color:#000;letter-spacing:-0.211px;">Đỗ Thanh</span><span class="t" style="left:139.4px;top:241.0px;font-size:16px;color:#000;letter-spacing:-0.051px;">Hoa</span><span class="t" style="left:275.1px;top:231.0px;font-size:16px;color:#000;">5</span><span class="t" style="left:331.4px;top:231.0px;font-size:16px;color:#000;letter-spacing:-0.505px;">Trung bình</span><span class="t" style="left:122.2px;top:271.0px;font-size:16px;color:#000;">6</span><span class="t" style="left:139.4px;top:261.0px;font-size:16px;color:#000;letter-spacing:-0.124px;">Lê Hồng</span><span class="t" style="left:139.4px;top:281.0px;font-size:16px;color:#000;letter-spacing:0.216px;">Ngọc</span><span class="t" style="left:268.4px;top:271.0px;font-size:16px;color:#000;">4.5</span><span class="t" style="left:331.4px;top:271.0px;font-size:16px;color:#000;letter-spacing:-0.735px;">Yếu</span><span class="t" style="left:122.2px;top:311.0px;font-size:16px;color:#000;">7</span><span class="t" style="left:139.4px;top:301.0px;font-size:16px;color:#000;letter-spacing:-0.336px;">Đoàn Thanh</span><span class="t" style="left:139.4px;top:321.0px;font-size:16px;color:#000;letter-spacing:0.390px;">Vân</span><span class="t" style="left:268.4px;top:311.0px;font-size:16px;color:#000;">7.2</span><span class="t" style="left:331.4px;top:311.0px;font-size:16px;color:#000;letter-spacing:-0.110px;">Khá</span><span class="t" style="left:122.2px;top:351.0px;font-size:16px;color:#000;">8</span><span class="t" style="left:139.4px;top:341.0px;font-size:16px;color:#000;letter-spacing:-0.021px;">Ngô Ngọc</span><span class="t" style="left:139.4px;top:361.0px;font-size:16px;color:#000;letter-spacing:-0.339px;">Bích</span><span class="t" style="left:275.1px;top:351.0px;font-size:16px;color:#000;">0</span><span class="t" style="left:331.4px;top:351.0px;font-size:16px;color:#000;letter-spacing:-0.735px;">Yếu</span><span class="t" style="left:122.2px;top:391.0px;font-size:16px;color:#000;">9</span><span class="t" style="left:139.4px;top:381.0px;font-size:16px;color:#000;letter-spacing:-0.297px;">Hoàng Thu</span><span class="t" style="left:139.4px;top:401.0px;font-size:16px;color:#000;letter-spacing:-0.157px;">Thảo</span><span class="t" style="left:268.4px;top:391.0px;font-size:16px;color:#000;">6.6</span><span class="t" style="left:331.4px;top:391.0px;font-size:16px;color:#000;letter-spacing:-0.110px;">Khá</span><span class="t" style="left:113.3px;top:431.0px;font-size:16px;color:#000;">10</span><span class="t" style="left:139.4px;top:421.0px;font-size:16px;color:#000;letter-spacing:-0.285px;">Đinh Minh</span><span class="t" style="left:139.4px;top:441.0px;font-size:16px;color:#000;letter-spacing:0.992px;">Đức</span><span class="t" style="left:268.4px;top:431.0px;font-size:16px;color:#000;">8.7</span><span class="t" style="left:331.4px;top:431.0px;font-size:16px;color:#000;letter-spacing:0.349px;">Giỏi</span><span class="t" style="left:556.2px;top:36.0px;font-size:16px;color:#000;letter-spacing:-0.321px;">Quy định xếp loại</span><span class="t" style="left:563.1px;top:71.0px;font-size:16px;color:#000;">0</span><span class="t" style="left:619.4px;top:71.0px;font-size:16px;color:#000;letter-spacing:-0.735px;">Yếu</span><span class="t" style="left:556.4px;top:111.0px;font-size:16px;color:#000;">5.5</span><span class="t" style="left:619.4px;top:111.0px;font-size:16px;color:#000;letter-spacing:-0.505px;">Trung bình</span><span class="t" style="left:563.1px;top:151.0px;font-size:16px;color:#000;">7</span><span class="t" style="left:619.4px;top:151.0px;font-size:16px;color:#000;letter-spacing:-0.110px;">Khá</span><span class="t" style="left:556.4px;top:191.0px;font-size:16px;color:#000;">8.5</span><span class="t" style="left:619.4px;top:191.0px;font-size:16px;color:#000;letter-spacing:0.349px;">Giỏi</span><div class="a" style="left:913.5px;top:0px;width:31px;height:800px;background:#4c4c4c;"></div><div class="a" style="left:916px;top:0.5px;width:26px;height:780px;background:#3c3c3c;border-radius:13px 13px 0 0;"></div><div class="a" style="left:922.5px;top:25.5px;width:13px;height:733px;background:#c6c6c6;border-radius:6.5px;"></div><svg class="a" style="left:922px;top:7px;" width="14" height="11" viewBox="0 0 14 11"><path d="M7 1.5 L12.800 9.500 H1.200 Z" fill="#c8c8c8" stroke="#c8c8c8" stroke-width="1.600" stroke-linejoin="round"/></svg><svg class="a" style="left:922px;top:777px;" width="14" height="11" viewBox="0 0 14 11"><path d="M7 9.500 L12.800 1.500 H1.200 Z" fill="#c8c8c8" stroke="#c8c8c8" stroke-width="1.600" stroke-linejoin="round"/></svg></div></div>
<!-- sec_copilot -->
<div id="sec_copilot"><div class="a" style="left:944px;top:324px;width:976px;height:842px;background:#525252;"></div><svg class="a" style="left:962px;top:336.3px;" width="34" height="31" viewBox="0 0 45 40.2"><defs>
<linearGradient id="c1a" x1="0" y1="0" x2="0" y2="1"><stop offset="0" stop-color="#1a9cf5"/><stop offset=".22" stop-color="#1f9fe0"/><stop offset=".5" stop-color="#44b48c"/><stop offset=".75" stop-color="#b6cc2e"/><stop offset="1" stop-color="#f5c813"/></linearGradient>
<linearGradient id="c1b" x1="0" y1="0" x2="1" y2="1"><stop offset="0" stop-color="#0b58d8"/><stop offset=".6" stop-color="#1b45cf"/><stop offset="1" stop-color="#2a7af0"/></linearGradient>
<linearGradient id="c1c" x1=".75" y1="0" x2=".3" y2="1"><stop offset="0" stop-color="#a24be6"/><stop offset=".35" stop-color="#df4bb5"/><stop offset=".68" stop-color="#f9557c"/><stop offset="1" stop-color="#ffa24a"/></linearGradient>
<linearGradient id="c1d" x1="0" y1="0" x2=".6" y2="1"><stop offset="0" stop-color="#ff8a2e"/><stop offset="1" stop-color="#e23a2a"/></linearGradient>
<linearGradient id="c1e" x1="0" y1="0" x2="1" y2="0"><stop offset="0" stop-color="#0a2a3a" stop-opacity="0"/><stop offset="1" stop-color="#14243c" stop-opacity="0.9"/></linearGradient>
</defs>
<path d="M20 0 H29 Q33 0 34.2 3.800 L36.500 12.300 H24 Z" fill="url(#c1b)"/>
<path d="M11 29.300 H24.500 L21.500 40.200 H19 Q15.500 40.200 14 36.500 Z" fill="url(#c1d)"/>
<path d="M11 0 H22 Q25.500 0 24.800 3.500 L20.300 29.700 H4 Q-0.500 29.700 0.500 25.500 L5 4.500 Q6 0 11 0 Z" fill="url(#c1a)"/>
<path d="M16 12.300 H26 L22.800 29.700 H13 Z" fill="url(#c1e)"/>
<path d="M28 12.100 H40.500 Q45.800 12.100 44.700 16.500 L40.200 35.500 Q39 40.200 34.500 40.200 H21.300 L25.300 15 Q25.800 12.100 28 12.100 Z" fill="url(#c1c)"/></svg><span class="t" style="left:1007.0px;top:345.0px;font-size:21px;color:#fff;letter-spacing:1.097px;-webkit-text-stroke:0.35px #fff;">Copilot</span><svg class="a" style="left:1827.5px;top:348.75px;" width="23" height="13.5" viewBox="0 0 23 13.5"><path d="M2 2 L11.5 11.5 L21 2" fill="none" stroke="#fff" stroke-width="1.7" stroke-linecap="round" stroke-linejoin="round"/></svg><svg class="a" style="left:1880.3px;top:347.2px;" width="16" height="16" viewBox="0 0 16 16"><path d="M0.800 0.800 L15.200 15.200 M15.200 0.800 L0.800 15.200" stroke="#fff" stroke-width="1.700" stroke-linecap="round"/></svg><div class="a" style="left:962px;top:385px;width:940px;height:761px;background:#292726;overflow:hidden"><div class="a" style="left:71px;top:35px;width:783px;height:82px;background:#06281a;border-radius:12px;"></div><div class="a" style="left:71px;top:0px;width:783px;height:45px;background:#292726;"></div><div class="a" style="left:36px;top:20.5px;width:23.5px;height:2px;background:#f4f4f4;border-radius:1px;"></div><div class="a" style="left:36px;top:27.80000000000001px;width:23.5px;height:2px;background:#f4f4f4;border-radius:1px;"></div><div class="a" style="left:36px;top:35px;width:23.5px;height:2px;background:#f4f4f4;border-radius:1px;"></div><svg class="a" style="left:81.5px;top:16px;" width="26.5" height="25.5" viewBox="0 0 45 40.2"><defs>
<linearGradient id="c2a" x1="0" y1="0" x2="0" y2="1"><stop offset="0" stop-color="#1a9cf5"/><stop offset=".22" stop-color="#1f9fe0"/><stop offset=".5" stop-color="#44b48c"/><stop offset=".75" stop-color="#b6cc2e"/><stop offset="1" stop-color="#f5c813"/></linearGradient>
<linearGradient id="c2b" x1="0" y1="0" x2="1" y2="1"><stop offset="0" stop-color="#0b58d8"/><stop offset=".6" stop-color="#1b45cf"/><stop offset="1" stop-color="#2a7af0"/></linearGradient>
<linearGradient id="c2c" x1=".75" y1="0" x2=".3" y2="1"><stop offset="0" stop-color="#a24be6"/><stop offset=".35" stop-color="#df4bb5"/><stop offset=".68" stop-color="#f9557c"/><stop offset="1" stop-color="#ffa24a"/></linearGradient>
<linearGradient id="c2d" x1="0" y1="0" x2=".6" y2="1"><stop offset="0" stop-color="#ff8a2e"/><stop offset="1" stop-color="#e23a2a"/></linearGradient>
<linearGradient id="c2e" x1="0" y1="0" x2="1" y2="0"><stop offset="0" stop-color="#0a2a3a" stop-opacity="0"/><stop offset="1" stop-color="#14243c" stop-opacity="0.9"/></linearGradient>
</defs>
<path d="M20 0 H29 Q33 0 34.2 3.800 L36.500 12.300 H24 Z" fill="url(#c2b)"/>
<path d="M11 29.300 H24.500 L21.500 40.200 H19 Q15.500 40.200 14 36.500 Z" fill="url(#c2d)"/>
<path d="M11 0 H22 Q25.500 0 24.800 3.500 L20.300 29.700 H4 Q-0.500 29.700 0.500 25.500 L5 4.500 Q6 0 11 0 Z" fill="url(#c2a)"/>
<path d="M16 12.300 H26 L22.800 29.700 H13 Z" fill="url(#c2e)"/>
<path d="M28 12.100 H40.500 Q45.800 12.100 44.700 16.500 L40.200 35.500 Q39 40.200 34.500 40.200 H21.300 L25.300 15 Q25.800 12.100 28 12.100 Z" fill="url(#c2c)"/></svg><span class="t" style="left:117.5px;top:20.0px;font-size:20.3px;color:#fff;letter-spacing:0.183px;font-weight:bold;">Copilot</span><span class="t" style="left:95.5px;top:52.0px;font-size:20.2px;color:#fff;letter-spacing:0.235px;">Dựa vào điểm trung bình cột C và quy định xếp loại ở cột F và G, hãy xếp loại</span><span class="t" style="left:95.5px;top:82.0px;font-size:20.2px;color:#fff;letter-spacing:0.343px;">học sinh ở cột D</span><svg class="a" style="left:48.5px;top:147px;" width="26.5" height="25.5" viewBox="0 0 45 40.2"><defs>
<linearGradient id="c3a" x1="0" y1="0" x2="0" y2="1"><stop offset="0" stop-color="#1a9cf5"/><stop offset=".22" stop-color="#1f9fe0"/><stop offset=".5" stop-color="#44b48c"/><stop offset=".75" stop-color="#b6cc2e"/><stop offset="1" stop-color="#f5c813"/></linearGradient>
<linearGradient id="c3b" x1="0" y1="0" x2="1" y2="1"><stop offset="0" stop-color="#0b58d8"/><stop offset=".6" stop-color="#1b45cf"/><stop offset="1" stop-color="#2a7af0"/></linearGradient>
<linearGradient id="c3c" x1=".75" y1="0" x2=".3" y2="1"><stop offset="0" stop-color="#a24be6"/><stop offset=".35" stop-color="#df4bb5"/><stop offset=".68" stop-color="#f9557c"/><stop offset="1" stop-color="#ffa24a"/></linearGradient>
<linearGradient id="c3d" x1="0" y1="0" x2=".6" y2="1"><stop offset="0" stop-color="#ff8a2e"/><stop offset="1" stop-color="#e23a2a"/></linearGradient>
<linearGradient id="c3e" x1="0" y1="0" x2="1" y2="0"><stop offset="0" stop-color="#0a2a3a" stop-opacity="0"/><stop offset="1" stop-color="#14243c" stop-opacity="0.9"/></linearGradient>
</defs>
<path d="M20 0 H29 Q33 0 34.2 3.800 L36.500 12.300 H24 Z" fill="url(#c3b)"/>
<path d="M11 29.300 H24.500 L21.500 40.200 H19 Q15.500 40.200 14 36.500 Z" fill="url(#c3d)"/>
<path d="M11 0 H22 Q25.500 0 24.800 3.500 L20.300 29.700 H4 Q-0.500 29.700 0.500 25.500 L5 4.500 Q6 0 11 0 Z" fill="url(#c3a)"/>
<path d="M16 12.300 H26 L22.800 29.700 H13 Z" fill="url(#c3e)"/>
<path d="M28 12.100 H40.500 Q45.800 12.100 44.700 16.500 L40.200 35.500 Q39 40.200 34.500 40.200 H21.300 L25.300 15 Q25.800 12.100 28 12.100 Z" fill="url(#c3c)"/></svg><span class="t" style="left:88.5px;top:152.0px;font-size:20.3px;color:#fff;letter-spacing:0.016px;font-weight:bold;">Copilot</span><div class="a" style="left:170px;top:152px;width:269px;height:24.5px;background:#050505;border-radius:6px;"></div><span class="t" style="left:176.5px;top:156.0px;font-size:15px;color:#d0d0d0;letter-spacing:0.052px;">AI-generated content may be incorrect</span><span class="t" style="left:47.8px;top:195.0px;font-size:20.2px;color:#fff;letter-spacing:0.075px;">Looking at</span><span class="t" style="left:150.5px;top:195.0px;font-size:20.2px;color:#fff;font-weight:bold;transform:scaleX(0.857);transform-origin:0 0;">A1:D11</span><span class="t" style="left:210.3px;top:195.0px;font-size:20.2px;color:#fff;letter-spacing:0.343px;">, here&#x27;s 1 formula column to review and insert in</span><span class="t" style="left:661.3px;top:195.0px;font-size:20.2px;color:#fff;letter-spacing:-0.548px;font-weight:bold;">Column E</span><span class="t" style="left:753.5px;top:195.0px;font-size:20.2px;color:#fff;letter-spacing:-2.656px;">:</span><span class="t" style="left:46.5px;top:243.0px;font-size:20.2px;color:#fff;letter-spacing:0.038px;font-weight:bold;">Xếp loại2</span><span class="t" style="left:46.5px;top:285.0px;font-size:20.2px;color:#fff;letter-spacing:0.171px;">Xác định xếp loại học lực cho từng học sinh dựa trên &quot;Điểm TB&quot;, với các mức: 9 (điểm trở</span><span class="t" style="left:46.5px;top:315.0px;font-size:20.2px;color:#fff;letter-spacing:0.174px;">lên) là &quot;Xuất sắc&quot;, 8 (điểm trở lên) là &quot;Giỏi&quot;, 6.5 (điểm trở lên) là &quot;Khá&quot;, 5 (điểm trở lên) là</span><span class="t" style="left:46.5px;top:345.0px;font-size:20.2px;color:#fff;letter-spacing:0.141px;">&quot;Trung bình&quot;, và dưới 5 (điểm) là &quot;Yếu&quot;.</span><div class="a" style="left:46px;top:379px;width:833px;height:141px;background:#292726;border:1px solid #5e5e5e;border-radius:9px;overflow:hidden;"></div><div class="a" style="left:47px;top:380px;width:831px;height:46px;background:#0a0a0a;border-radius:8px 8px 0 0;"></div><div class="a" style="left:47px;top:426px;width:831px;height:1px;background:#5e5e5e;"></div><span class="t" style="left:65.5px;top:393.0px;font-size:23px;color:#fff;font-style:italic;font-family:'Liberation Serif',serif;">f</span><span class="t" style="left:74.0px;top:397.0px;font-size:19px;color:#fff;font-style:italic;">x</span><svg class="a" style="left:838px;top:392px;" width="20" height="25" viewBox="0 0 20 25"><rect x="5" y="1" width="13.500" height="18.500" rx="2.500" fill="none" stroke="#e8e8e8" stroke-width="1.500"/><path d="M2.500 5 Q1 5.500 1 7.500 V19.500 Q1 23.500 5 23.500 H13 Q15 23.500 15.500 22" fill="none" stroke="#e8e8e8" stroke-width="1.500"/></svg><span class="t" style="left:64.5px;top:452.0px;font-size:20px;color:#fff;letter-spacing:-0.468px;font-family:'Liberation Mono',monospace;-webkit-text-stroke:0.45px #fff;">=IF($C2&gt;=9,&quot;Xuất</span><span class="t" style="left:64.5px;top:482.0px;font-size:20px;color:#fff;letter-spacing:-0.456px;font-family:'Liberation Mono',monospace;-webkit-text-stroke:0.45px #fff;">sắc&quot;,IF($C2&gt;=8,&quot;Giỏi&quot;,IF($C2&gt;=6.5,&quot;Khá&quot;,IF($C2&gt;=5,&quot;Trung</span><div class="a" style="left:0px;top:495.5px;width:924px;height:270px;background:#292726;"></div><div class="a" style="left:68px;top:502px;width:174px;height:43px;background:#292726;border:1px solid #1f4a34;border-radius:11px;"></div><span class="t" style="left:80.5px;top:515.0px;font-size:18.4px;color:#fff;letter-spacing:-0.262px;">Show data insights</span><div class="a" style="left:255px;top:502px;width:347px;height:43px;background:#292726;border:1px solid #1f4a34;border-radius:11px;"></div><span class="t" style="left:267.5px;top:515.0px;font-size:18.4px;color:#fff;letter-spacing:-0.144px;">Show a suggestion for a formula column</span><div class="a" style="left:615px;top:502px;width:272px;height:43px;background:#292726;border:1px solid #1f4a34;border-radius:11px;"></div><span class="t" style="left:626.5px;top:515.0px;font-size:18.4px;color:#fff;letter-spacing:0.051px;">Suggest conditional formatting</span><div class="a" style="left:841px;top:557px;width:46px;height:41px;background:#292726;border:1px solid #1f4a34;border-radius:11px;"></div><svg class="a" style="left:855px;top:568px;" width="19" height="19" viewBox="0 0 19 19"><path d="M16.200 9.500 A6.900 6.900 0 1 1 13.300 3.900" fill="none" stroke="#f0f0f0" stroke-width="1.500" stroke-linecap="round"/><path d="M13.800 0.800 V4.800 H9.800" fill="none" stroke="#f0f0f0" stroke-width="1.500" stroke-linecap="round" stroke-linejoin="round"/></svg><div class="a" style="left:47px;top:604.5px;width:847px;height:118px;background:#292827;border:1px solid #6a6a6a;border-radius:9px;"></div><span class="t" style="left:59.5px;top:630.0px;font-size:20.2px;color:#9b9b9b;letter-spacing:0.370px;">Search for content, ask a question, or tell me what you&#x27;d like to do with A1:D11</span><svg class="a" style="left:686px;top:675px;" width="28" height="27" viewBox="0 0 28 27"><path d="M11 2 Q12.200 9.300 19.500 10.500 Q12.200 11.700 11 19 Q9.800 11.700 2.500 10.500 Q9.800 9.300 11 2 Z" fill="none" stroke="#f0f0f0" stroke-width="1.500" stroke-linejoin="round"/>
<path d="M23.500 2 V7 M21 4.500 H26" stroke="#f0f0f0" stroke-width="1.400" stroke-linecap="round"/><path d="M4 21.500 V26 M1.800 23.800 H6.300" stroke="#f0f0f0" stroke-width="1.400" stroke-linecap="round"/>
<rect x="10.500" y="10.800" width="15.500" height="14.700" rx="3.500" fill="#292827" stroke="#292827" stroke-width="4"/>
<rect x="10.500" y="10.800" width="15.500" height="14.700" rx="3.500" fill="#292827" stroke="#f0f0f0" stroke-width="1.500"/><path d="M14.500 16 H22 M14.500 20.300 H19" stroke="#f0f0f0" stroke-width="1.500" stroke-linecap="round"/></svg><svg class="a" style="left:735px;top:676px;" width="26" height="26" viewBox="0 0 26 26"><circle cx="13" cy="13" r="11.700" fill="none" stroke="#f0f0f0" stroke-width="1.500"/><ellipse cx="13" cy="13" rx="5" ry="11.700" fill="none" stroke="#f0f0f0" stroke-width="1.400"/><path d="M2 9 H24 M2 17 H24" stroke="#f0f0f0" stroke-width="1.400"/></svg><div class="a" style="left:772px;top:673px;width:1px;height:32px;background:#555;"></div><svg class="a" style="left:793px;top:675px;" width="20" height="27" viewBox="0 0 20 27"><rect x="6" y="1" width="8" height="15" rx="4" fill="none" stroke="#f0f0f0" stroke-width="1.500"/><path d="M2 12 Q2 20 10 20 Q18 20 18 12 M10 20 V25.500" fill="none" stroke="#f0f0f0" stroke-width="1.500" stroke-linecap="round"/></svg><svg class="a" style="left:844px;top:677px;" width="27" height="24" viewBox="0 0 27 24"><path d="M1.500 1.500 L25 12 L1.500 22.500 L4 12 Z M4 12 H13" fill="none" stroke="#5c5c5c" stroke-width="1.500" stroke-linejoin="round" stroke-linecap="round"/></svg><div class="a" style="left:924px;top:45px;width:16px;height:451px;background:#32312f;border-radius:8px;"></div><div class="a" style="left:927.5px;top:251px;width:10px;height:120px;background:#bdbdbd;border-radius:5px;"></div></div></div>
<!-- sec_bottom -->
<div id="sec_bottom"><div class="a" style="left:0px;top:1118px;width:944px;height:48px;background:linear-gradient(90deg,#4f4e51 0%,#504e51 55%,#575256 100%);"></div><svg class="a" style="left:33px;top:1131px;" width="12" height="19" viewBox="0 0 12 19"><path d="M10 1.500 L2 9.500 L10 17.500" fill="none" stroke="#a8a8a8" stroke-width="1.500" stroke-linecap="round" stroke-linejoin="round"/></svg><svg class="a" style="left:82px;top:1131px;" width="12" height="19" viewBox="0 0 12 19"><path d="M2 1.500 L10 9.500 L2 17.500" fill="none" stroke="#a8a8a8" stroke-width="1.500" stroke-linecap="round" stroke-linejoin="round"/></svg><svg class="a" style="left:158px;top:1118px;" width="102" height="42" viewBox="0 0 102 42"><path d="M0 0 Q8 0 8 8 V33 Q8 42 17 42 H85 Q94 42 94 33 V8 Q94 0 102 0 Z" fill="#fff"/></svg><span class="t" style="left:178.0px;top:1129.0px;font-size:20.5px;color:#222;letter-spacing:-0.595px;">Sheet1</span><div class="a" style="left:178px;top:1152.5px;width:62px;height:3px;background:#1f7044;"></div><div class="a" style="left:258px;top:1128px;width:1px;height:28px;background:#8a8a8a;"></div><svg class="a" style="left:321px;top:1131px;" width="18" height="18" viewBox="0 0 18 18"><path d="M9 0.500 V17.500 M0.500 9 H17.500" stroke="#f0f0f0" stroke-width="1.600"/></svg><div class="a" style="left:570.7px;top:1135.2px;width:3px;height:3px;background:#e4e4e4;"></div><div class="a" style="left:570.7px;top:1141.1px;width:3px;height:3px;background:#e4e4e4;"></div><div class="a" style="left:570.7px;top:1147.0px;width:3px;height:3px;background:#e4e4e4;"></div><div class="a" style="left:916px;top:1095px;width:26px;height:25.5px;background:#3c3c3c;border-radius:0 0 13px 13px;"></div><svg class="a" style="left:922px;top:1102.5px;" width="14" height="11" viewBox="0 0 14 11"><path d="M7 9.500 L12.800 1.500 H1.200 Z" fill="#c8c8c8" stroke="#c8c8c8" stroke-width="1.600" stroke-linejoin="round"/></svg><div class="a" style="left:597px;top:1128.5px;width:320px;height:25px;background:#3c3c3c;border-radius:12.500px;"></div><div class="a" style="left:622px;top:1134.5px;width:241px;height:12px;background:#c6c6c6;border-radius:6px;"></div><svg class="a" style="left:603px;top:1134.5px;" width="11" height="14" viewBox="0 0 11 14"><path d="M1.500 7 L9.500 1.200 V12.800 Z" fill="#c8c8c8" stroke="#c8c8c8" stroke-width="1.600" stroke-linejoin="round"/></svg><svg class="a" style="left:898px;top:1134.5px;" width="11" height="14" viewBox="0 0 11 14"><path d="M9.500 7 L1.500 1.200 V12.800 Z" fill="#c8c8c8" stroke="#c8c8c8" stroke-width="1.600" stroke-linejoin="round"/></svg><div class="a" style="left:0px;top:1166px;width:1920px;height:34px;background:#525252;border-top:1px solid #434343;"></div><span class="t" style="left:15.5px;top:1176.0px;font-size:15.6px;color:#f0f0f0;letter-spacing:-0.274px;">Ready</span><svg class="a" style="left:86px;top:1171.5px;" width="24" height="23" viewBox="0 0 24 23"><circle cx="10.700" cy="3.800" r="2.500" fill="none" stroke="#f0f0f0" stroke-width="1.500"/><path d="M2.200 6.300 Q1.500 8.300 3.500 8.600 Q7 9.300 8 10 Q8.500 13 6.500 16.500 Q4.800 19.500 5.800 20.800 Q7.200 21.500 8.200 19.500 L10.700 14.500 L12 16.500 M19.200 6.300 Q19.900 8.300 17.900 8.600 Q14.400 9.300 13.400 10 Q13.200 11.500 13.800 13" fill="none" stroke="#f0f0f0" stroke-width="1.500" stroke-linecap="round" stroke-linejoin="round"/><path d="M12.300 17.300 L15.300 20.300 L22.200 13.200" fill="none" stroke="#f0f0f0" stroke-width="1.600" stroke-linecap="round" stroke-linejoin="round"/></svg><span class="t" style="left:113.5px;top:1176.0px;font-size:15.6px;color:#f0f0f0;letter-spacing:-0.034px;">Accessibility: Good to go</span><span class="t" style="left:1380.5px;top:1176.0px;font-size:15.6px;color:#f0f0f0;letter-spacing:-0.081px;">Count: 10</span><div class="a" style="left:1474.5px;top:1167px;width:60.5px;height:33px;background:#5b5b5b;"></div><div class="a" style="left:0px;top:1199px;width:1920px;height:1px;background:#b8b8b8;"></div><svg class="a" style="left:1494px;top:1173px;" width="20" height="20" viewBox="0 0 20 20"><rect x="0.800" y="0.800" width="18.400" height="18.400" fill="none" stroke="#f0f0f0" stroke-width="1.500"/><path d="M0.800 7 H19.200 M0.800 13 H19.200 M7 0.800 V19.200 M13 0.800 V19.200" stroke="#f0f0f0" stroke-width="1.400"/></svg><svg class="a" style="left:1554px;top:1173px;" width="21" height="20" viewBox="0 0 21 20"><rect x="0.800" y="0.800" width="19.400" height="18.400" fill="none" stroke="#f0f0f0" stroke-width="1.500"/><rect x="5" y="4.500" width="11" height="11" fill="none" stroke="#f0f0f0" stroke-width="1.400"/><path d="M7.500 8 H13.500 M7.500 11.500 H13.500" stroke="#f0f0f0" stroke-width="1.300"/></svg><svg class="a" style="left:1613px;top:1173px;" width="21" height="20" viewBox="0 0 21 20"><path d="M0.800 0.800 H20.200 V19.200 H0.800 Z M0.800 13 H8 V0.800 M14 0.800 V13 H20.200" fill="none" stroke="#f0f0f0" stroke-width="1.500"/></svg><div class="a" style="left:1663px;top:1182.2px;width:11px;height:1.5px;background:#d0d0d0;"></div><div class="a" style="left:1683px;top:1182px;width:148px;height:1.8px;background:#c4c4c4;"></div><div class="a" style="left:1753.5px;top:1174px;width:7px;height:16.5px;background:#d4d4d4;border-radius:1px;"></div><svg class="a" style="left:1838px;top:1177px;" width="13" height="13" viewBox="0 0 13 13"><path d="M6.500 0.500 V12.500 M0.500 6.500 H12.500" stroke="#d8d8d8" stroke-width="1.300"/></svg><span class="t" style="left:1870.5px;top:1176.0px;font-size:15.6px;color:#f0f0f0;letter-spacing:-0.300px;">100%</span></div>
</body></html>
